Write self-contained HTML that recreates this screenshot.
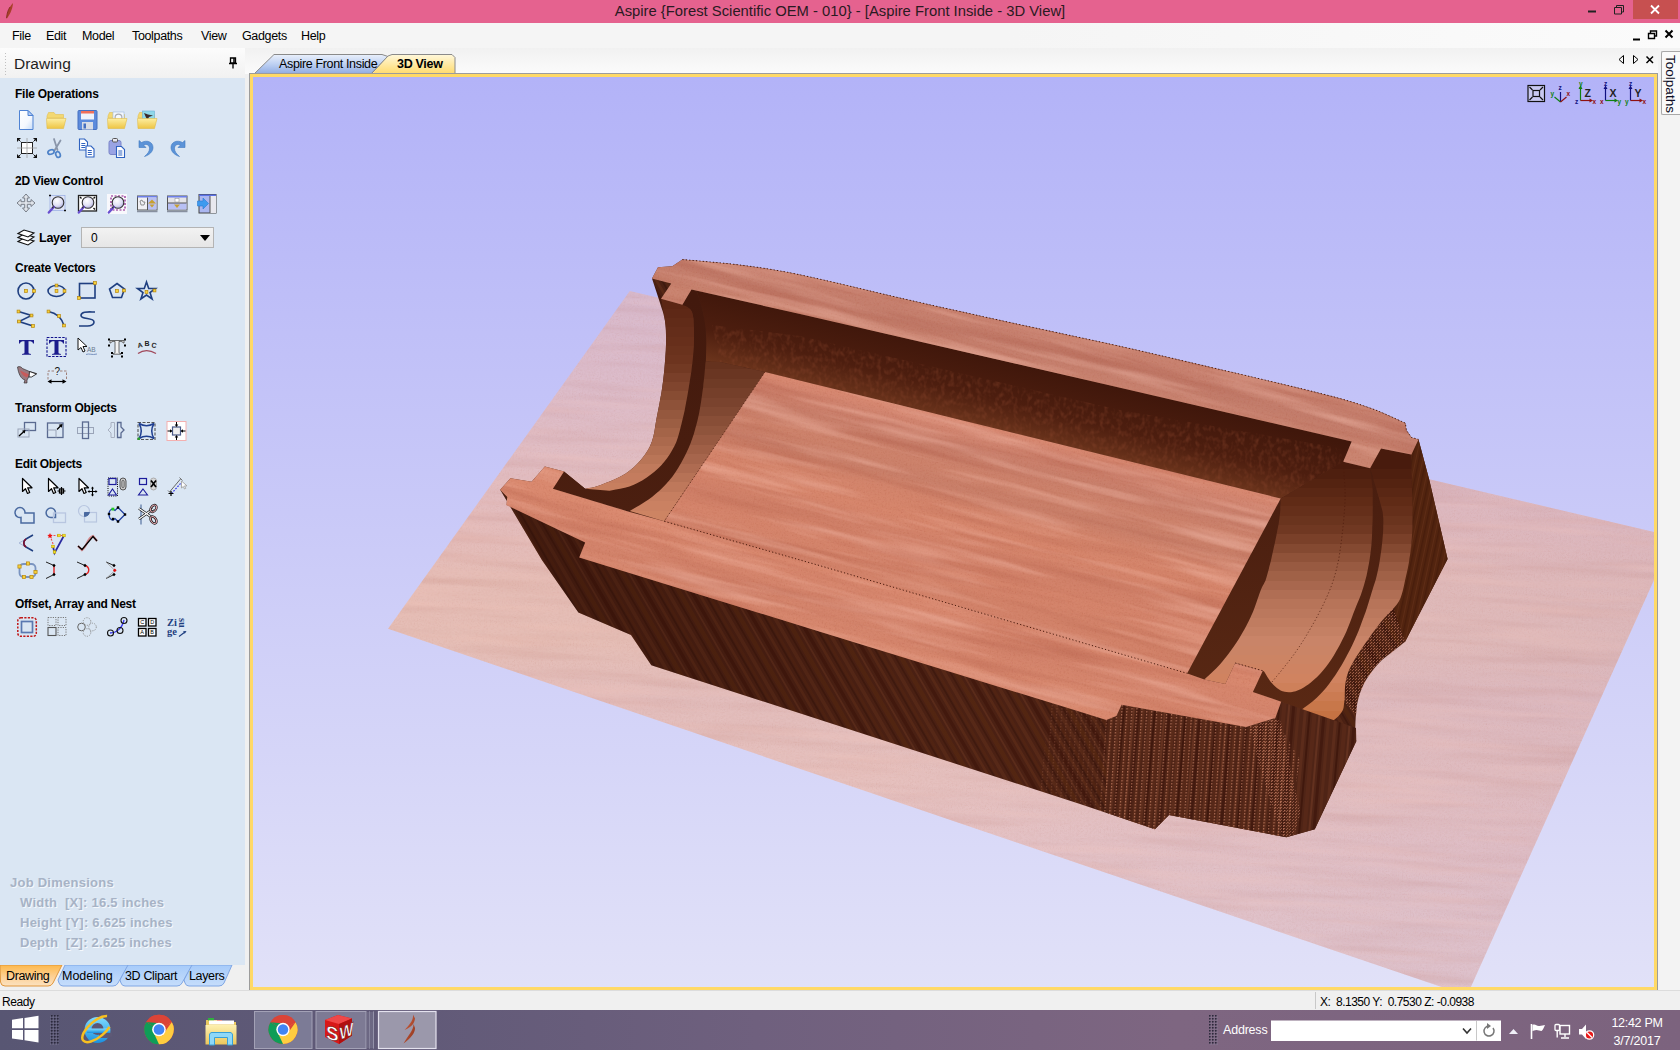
<!DOCTYPE html>
<html><head><meta charset="utf-8"><title>Aspire</title>
<style>
*{box-sizing:border-box;margin:0;padding:0}
html,body{width:1680px;height:1050px;overflow:hidden;background:#f0f0f0;font-family:"Liberation Sans",sans-serif;font-size:12px;color:#000}
.abs,.abs *{position:absolute}
#title{left:0;top:0;width:1680px;height:23px;background:#e5628f}
#title .t{left:0;width:1680px;top:3px;text-align:center;font-size:14.8px;color:#2a1a22;white-space:nowrap}
#menu{left:0;top:23px;width:1680px;height:25px;background:linear-gradient(90deg,#f5f5f5 60%,#fbfbfb)}
#menu span{top:6px;font-size:12.5px;color:#000;letter-spacing:-.35px}
#tabstrip{left:245px;top:48px;width:1415px;height:26px;background:linear-gradient(#f1f1f1,#fbfbfb)}
#lefthead{left:0;top:48px;width:245px;height:30px;background:linear-gradient(#fcfcfc,#f1f1f1)}
#left{left:0;top:78px;width:245px;height:887px;background:#dae6f3;overflow:hidden}
#leftgap{left:245px;top:74px;width:5px;height:916px;background:#f0f0f0}
#view{left:249px;top:73px;width:1409px;height:918px;background:#ffd966;border:1px solid #9c9c9c}
#gl{left:253px;top:77px;width:1401px;height:910px;background:linear-gradient(#b3b3f8,#e1e1f8);overflow:hidden}
#right{left:1658px;top:48px;width:22px;height:942px;background:#f3f3f3}
#status{left:0;top:990px;width:1680px;height:20px;background:#f0f0f0;border-top:1px solid #dcdcdc}
#task{left:0;top:1010px;width:1680px;height:40px;background:linear-gradient(90deg,#585673 0%,#615a78 25%,#6f607e 45%,#7e6681 70%,#7c637e 100%)}
.h{left:15px;font-weight:bold;font-size:12px;color:#000;white-space:nowrap;letter-spacing:-0.25px;margin-top:1px}
.jd{color:#a7b3c6;font-weight:bold;font-size:13px;white-space:nowrap;text-shadow:1px 1px 0 #f4f8fc;letter-spacing:.25px}
.btab{top:0;height:23px;font-size:12.5px;white-space:nowrap;letter-spacing:-.35px}
.tb{top:3px;height:36px;background:rgba(255,255,255,.2);border:1px solid rgba(255,255,255,.3)}
</style></head><body>
<div id="title" class="abs"><div class="t">Aspire {Forest Scientific OEM - 010} - [Aspire Front Inside - 3D View]</div>
<svg style="left:3px;top:2px" width="14" height="18" viewBox="0 0 14 18"><path d="M10 1c-3 3-6 8-6.500 16 3-4 6-9 6.500-16z" fill="#a8402a"/><path d="M7 5c-2 3-3 6-3.500 11" stroke="#7a2a18" stroke-width=".8" fill="none"/></svg>
<div style="left:1633px;top:0;width:45px;height:19px;background:#c75050"></div>
<svg style="left:1580px;top:0" width="100" height="22" viewBox="0 0 100 22"><path d="M8 11.500h8" stroke="#222" stroke-width="2"/><path d="M34.500 7.500h7v6.500h-7zM36.500 7.500v-2h7v6.500h-2" fill="none" stroke="#222" stroke-width="1"/><path d="M71 5.500l8 8M79 5.500l-8 8" stroke="#fff" stroke-width="1.800"/></svg>
</div>
<div id="menu" class="abs"><span style="left:12px">File</span><span style="left:46px">Edit</span><span style="left:82px">Model</span><span style="left:132px">Toolpaths</span><span style="left:201px">View</span><span style="left:242px">Gadgets</span><span style="left:301px">Help</span>
<svg style="left:1625px;top:3px" width="55" height="20" viewBox="0 0 55 20"><path d="M8 13.500h7" stroke="#000" stroke-width="2"/><path d="M23.500 7.500h6v5h-6zM25.500 7.500v-2.500h6v5h-2" fill="none" stroke="#000" stroke-width="1.400"/><path d="M40.500 4.500l7 7M47.500 4.500l-7 7" stroke="#000" stroke-width="2"/></svg>
</div>
<div id="tabstrip" class="abs">
<svg style="left:0;top:0" width="1415" height="26" viewBox="245 48 1415 26">
<defs><linearGradient id="tb1" x1="0" y1="0" x2="0" y2="1"><stop offset="0" stop-color="#eaf0fb"/><stop offset=".5" stop-color="#bdd0f2"/><stop offset="1" stop-color="#8eaae2"/></linearGradient>
<linearGradient id="tb2" x1="0" y1="0" x2="0" y2="1"><stop offset="0" stop-color="#fff8dc"/><stop offset="1" stop-color="#ffd966"/></linearGradient></defs>
<path d="M254 74l20-19.500h108l6 2-17 17.500z" fill="url(#tb1)" stroke="#8a8a8a" stroke-width="1"/>
<path d="M371 75l17-19 4-1.500h60l3 3v17.500z" fill="url(#tb2)"/><path d="M371 74l17-18 4-1.500h60l3 3v16.500" fill="none" stroke="#8a8a8a" stroke-width="1"/>
<path d="M1623.500 55.500v8l-4.500-4zM1633.500 55.500v8l4.500-4z" fill="none" stroke="#000" stroke-width="1"/><path d="M1646.500 56.500l6.500 6.500M1653 56.500l-6.500 6.500" stroke="#000" stroke-width="1.500"/>
</svg>
<div style="left:34px;top:9px;font-size:12.5px;white-space:nowrap;letter-spacing:-.35px">Aspire Front Inside</div>
<div style="left:152px;top:9px;font-size:12.5px;font-weight:bold;white-space:nowrap;letter-spacing:-.3px">3D View</div>
</div>
<div id="lefthead" class="abs"><div style="left:14px;top:7px;font-size:15.5px;color:#1e1e1e">Drawing</div>
<svg style="left:4px;top:5px" width="4" height="22"><path d="M1.500 0v22" stroke="#c0c0c0" stroke-width="1" stroke-dasharray="1 2"/></svg>
<svg style="left:228px;top:9px" width="10" height="12" viewBox="0 0 10 12"><path d="M2.500 1h5v5h-5zM1 6.500h8M5 6.500v5" stroke="#000" stroke-width="1.300" fill="none"/><path d="M6 1v5" stroke="#000" stroke-width="1.500"/></svg>
</div>
<div id="left" class="abs">
<svg width="245" height="887" viewBox="0 78 245 887" style="position:absolute;left:0;top:0">
<defs><linearGradient id="iDoc" x1="0" y1="0" x2="1" y2="1"><stop offset="0" stop-color="#fff"/><stop offset=".6" stop-color="#f4f8fe"/><stop offset="1" stop-color="#c6dcf8"/></linearGradient><linearGradient id="iFold" x1="0" y1="0" x2="0" y2="1"><stop offset="0" stop-color="#fdeea0"/><stop offset="1" stop-color="#eec544"/></linearGradient><radialGradient id="iLens" cx=".4" cy=".35" r=".7"><stop offset="0" stop-color="#fff"/><stop offset=".6" stop-color="#e0e0f4"/><stop offset="1" stop-color="#a8a8dc"/></radialGradient></defs>
<g transform="translate(15,109)"><path d="M4.5 1.5h8.5l5 5v14h-13.5z" fill="url(#iDoc)" stroke="#4f83d4"/><path d="M13 1.5v5h5z" fill="#b5cdf3" stroke="#4f83d4" stroke-linejoin="round"/></g>
<g transform="translate(45,109)"><path d="M2 7l1.5-3.5h5.5l1.5 2h8v3.5h-16.5z" fill="#f3d873" stroke="#e2c050" stroke-width=".6"/><path d="M1.5 9.5h19.5l-2.5 10h-16.5z" fill="url(#iFold)" stroke="#e0bc48" stroke-width=".6"/></g>
<g transform="translate(76,109)"><rect x="2" y="1.5" width="19" height="19" rx="1" fill="#5d8bdc" stroke="#4670c0"/><rect x="5" y="2" width="13" height="8.5" fill="#eef3fb"/><rect x="5" y="2" width="13" height="2.5" fill="#f0705a"/><rect x="6" y="13" width="11" height="7.5" fill="#d9dde6"/><rect x="7.5" y="14.5" width="2.5" height="5" fill="#4670c0"/></g>
<g transform="translate(106,109)"><path d="M2 7l1.5-3.5h5.5l1.5 2h8v3.5h-16.5z" fill="#f3d873" stroke="#e2c050" stroke-width=".6"/><rect x="7" y="3" width="11" height="9" fill="#f4f8fd" stroke="#9bb7e0" stroke-width=".6"/><circle cx="12.5" cy="8.5" r="3.4" fill="none" stroke="#a8acb4" stroke-width="1.2"/><path d="M1.5 9.5h19.5l-2.5 10h-16.5z" fill="url(#iFold)" stroke="#e0bc48" stroke-width=".6"/></g>
<g transform="translate(136,109)"><path d="M2 7l1.5-3.5h5.5l1.5 2h8v3.5h-16.5z" fill="#f3d873" stroke="#e2c050" stroke-width=".6"/><rect x="6.5" y="2" width="12" height="9.5" fill="#8fd8e8" stroke="#6ab0d8" stroke-width=".6"/><path d="M8 4l4 1.5 5 1-4 1.5-1.5 3-1.5-2.5z" fill="#3a2a2a"/><path d="M1.5 9.5h19.5l-2.5 10h-16.5z" fill="url(#iFold)" stroke="#e0bc48" stroke-width=".6"/></g>
<g transform="translate(16,137)"><rect x="5.5" y="5.5" width="11" height="11" fill="#fff" stroke="#222" stroke-width="1"/><path d="M1 11h20M11 1v20" stroke="#a0a0a0" stroke-width=".8"/><path d="M1 1h4l-4 4zM21 1v4l-4-4zM1 21v-4l4 4zM21 21h-4l4-4z" fill="#111"/><path d="M1.5 1.5l3 3M20.500 1.500l-3 3M1.500 20.500l3-3M20.500 20.500l-3-3" stroke="#111" stroke-width="1"/></g>
<g transform="translate(45,137)"><path d="M9 2l3.5 11M15.5 3.500l-6 10" stroke="#8a96aa" stroke-width="1.8" stroke-linecap="round"/><ellipse cx="6" cy="15" rx="3.2" ry="2.2" fill="none" stroke="#4f83c8" stroke-width="1.7" transform="rotate(-20 6 15)"/><ellipse cx="13" cy="17.5" rx="2.2" ry="3" fill="none" stroke="#4f83c8" stroke-width="1.7" transform="rotate(-20 13 17.500)"/></g>
<g transform="translate(76,137)"><g transform="translate(3.500,2)"><path d="M0 0h5l3 3v8h-8z" fill="#fff" stroke="#2f62c0" stroke-width="1.1"/><path d="M1.800 4.500h4M1.800 6.500h4M1.800 8.500h4" stroke="#2f62c0" stroke-width="1"/></g><g transform="translate(10,9)"><path d="M0 0h5l3 3v8h-8z" fill="#fff" stroke="#2f62c0" stroke-width="1.1"/><path d="M1.800 4.500h4M1.800 6.500h4M1.800 8.500h4" stroke="#2f62c0" stroke-width="1"/></g></g>
<g transform="translate(106,137)"><rect x="3" y="3.500" width="12" height="14" rx="2" fill="#9aa4e4" stroke="#7a84c8"/><rect x="6.500" y="1.500" width="5" height="3.500" rx="1" fill="#e8e8f0" stroke="#555"/><g transform="translate(10.500,9.500)"><path d="M0 0h5l3 3v8h-8z" fill="#fff" stroke="#2f62c0" stroke-width="1.1"/><path d="M1.800 4.500h4M1.800 6.500h4M1.800 8.500h4" stroke="#2f62c0" stroke-width="1"/></g></g>
<g transform="translate(136,137)"><path d="M3 3.500v7h7l-2.500-2.500c3-1.500 6 0 6 3.500c0 3-2 5.500-5 8c5-1.500 8.500-5 8.500-9c0-5.500-6-8-11.500-5z" fill="#5b93d8" stroke="#3f78c0" stroke-width=".6"/></g>
<g transform="translate(166,137)"><g transform="translate(22,0) scale(-1,1)"><path d="M3 3.500v7h7l-2.500-2.500c3-1.500 6 0 6 3.500c0 3-2 5.500-5 8c5-1.500 8.500-5 8.500-9c0-5.500-6-8-11.500-5z" fill="#5b93d8" stroke="#3f78c0" stroke-width=".6"/></g></g>
<g transform="translate(15,193)"><path d="M11 1l3.500 4h-2.200v3.700h3.700v-2.200l4 3.500-4 3.500v-2.200h-3.700v3.700h2.200l-3.500 4-3.500-4h2.200v-3.700h-3.700v2.200l-4-3.500 4-3.500v2.200h3.700v-3.700h-2.200z" fill="#e0e4ea" stroke="#787e88" stroke-width="1"/></g>
<g transform="translate(46,193)"><rect x="4" y="2.500" width="15" height="15" fill="#dfe4f6" stroke="#8aa0e0" stroke-width=".6"/><circle cx="12" cy="9.500" r="5.800" fill="url(#iLens)" stroke="#333" stroke-width="1.100"/><path d="M7.800 14l-5 5.500" stroke="#6a4fd0" stroke-width="2.400" stroke-linecap="round"/><path d="M7.500 13.500l-1.500 1.700" stroke="#333" stroke-width="1.200"/><path d="M3 2.500h2M4 1.500v2M18 17.500h2M19 16.500v2" stroke="#111" stroke-width="1"/></g>
<g transform="translate(76,193)"><rect x="2.500" y="2.500" width="18" height="15.500" fill="#fff" stroke="#222" stroke-width="1.300"/><circle cx="12" cy="9.500" r="5.800" fill="url(#iLens)" stroke="#333" stroke-width="1.100"/><path d="M7.800 14l-5 5.500" stroke="#6a4fd0" stroke-width="2.400" stroke-linecap="round"/><path d="M7.500 13.500l-1.500 1.700" stroke="#333" stroke-width="1.200"/><path d="M4 4l1.500 1.500M19 4l-1.500 1.500M19 16.500l-1.500-1.500" stroke="#111" stroke-width="1.400"/></g>
<g transform="translate(106,193)"><rect x="1" y="1" width="20" height="20" fill="#f8f8fc"/><rect x="5" y="3" width="14" height="14" fill="none" stroke="#8a1a8a" stroke-width="1.200" stroke-dasharray="2 1.500"/><circle cx="12" cy="9.500" r="5.800" fill="url(#iLens)" stroke="#333" stroke-width="1.100"/><path d="M7.800 14l-5 5.500" stroke="#6a4fd0" stroke-width="2.400" stroke-linecap="round"/><path d="M7.500 13.500l-1.500 1.700" stroke="#333" stroke-width="1.200"/></g>
<g transform="translate(136,193)"><rect x="1.500" y="3" width="19.500" height="14" fill="#f0f0f4" stroke="#555" stroke-width="1"/><rect x="1.500" y="3" width="19.500" height="1.500" fill="#6c7fe8"/><rect x="11.500" y="4.500" width="9" height="12" fill="#b8c0f4"/><path d="M11.500 4.500v12.500" stroke="#555"/><path d="M16 6.500l4 4h-8zM13.500 11.500h5l-2.500 3z" fill="#c8a030"/><path d="M4 8l2-1 1 2 2 0-1 3-3 0z" fill="none" stroke="#555" stroke-width=".6"/><path d="M1 18.500h20.500" stroke="#8890a0" stroke-width="1.500"/></g>
<g transform="translate(166,193)"><rect x="1.500" y="3" width="19.500" height="14" fill="#e4e4e8" stroke="#555" stroke-width="1"/><rect x="1.500" y="3" width="19.500" height="1.500" fill="#6c7fe8"/><rect x="2" y="10" width="18.500" height="6.500" fill="#b8c0f4"/><path d="M2 10h18.500" stroke="#555"/><path d="M8 11.500h6l-3 3.500z" fill="#c8a030"/><rect x="9" y="5.500" width="4" height="3.500" fill="#fff" stroke="#888" stroke-width=".5"/><path d="M1 18.500h20.500" stroke="#8890a0" stroke-width="1.500"/></g>
<g transform="translate(196,193)"><rect x="3" y="1.500" width="17" height="18.500" fill="#aab6f0" stroke="#444" stroke-width="1"/><rect x="3" y="1.500" width="17" height="1.500" fill="#5b72e8"/><rect x="14" y="3" width="6" height="17" fill="#e8e8ee"/><path d="M14 3v17" stroke="#555"/><path d="M1.500 8h5.500v-3l5.500 5.500-5.500 5.500v-3h-5.500z" fill="#3d9af0" stroke="#2a78d0" stroke-width=".6"/></g>
<g transform="translate(15,226)"><path d="M3 15.500l6-3.500 10 3-6 4z" fill="#fff" stroke="#111" stroke-width="1.100"/><path d="M3 11.500l6-3.500 10 3-6 4z" fill="#fff" stroke="#111" stroke-width="1.100"/><path d="M3 7.500l6-3.500 10 3-6 4z" fill="#fff" stroke="#111" stroke-width="1.100"/></g>
<g transform="translate(15.5,280)"><circle cx="10.500" cy="11" r="8" stroke="#1f3f80" stroke-width="1.600" fill="none"/><rect x="9.1" y="9.6" width="2.800" height="2.800" fill="#f5d23c" stroke="#b8860b" stroke-width=".7"/><rect x="17.1" y="9.6" width="2.800" height="2.800" fill="#f5d23c" stroke="#b8860b" stroke-width=".7"/></g>
<g transform="translate(45.5,280)"><ellipse cx="11" cy="11" rx="8.500" ry="5.500" stroke="#1f3f80" stroke-width="1.600" fill="none"/><rect x="9.6" y="4.1" width="2.800" height="2.800" fill="#f5d23c" stroke="#b8860b" stroke-width=".7"/><rect x="9.6" y="9.6" width="2.800" height="2.800" fill="#f5d23c" stroke="#b8860b" stroke-width=".7"/><rect x="17.6" y="9.6" width="2.800" height="2.800" fill="#f5d23c" stroke="#b8860b" stroke-width=".7"/></g>
<g transform="translate(76,280)"><rect x="3.500" y="3.500" width="15.500" height="14.500" stroke="#1f3f80" stroke-width="1.600" fill="none"/><rect x="17.6" y="1.6" width="2.800" height="2.800" fill="#f5d23c" stroke="#b8860b" stroke-width=".7"/><rect x="1.6" y="16.6" width="2.800" height="2.800" fill="#f5d23c" stroke="#b8860b" stroke-width=".7"/></g>
<g transform="translate(106,280)"><path d="M11 3.500l7.500 5.500-3 8.500h-9l-3-8.500z" stroke="#1f3f80" stroke-width="1.600" fill="none" stroke-width="1.300"/><rect x="9.6" y="9.6" width="2.800" height="2.800" fill="#f5d23c" stroke="#b8860b" stroke-width=".7"/><rect x="16.6" y="9.1" width="2.800" height="2.800" fill="#f5d23c" stroke="#b8860b" stroke-width=".7"/></g>
<g transform="translate(135.5,280)"><path d="M11 2l2.200 6.500h6.800l-5.500 4 2.100 6.500-5.600-4-5.600 4 2.100-6.500-5.500-4h6.800z" stroke="#1f3f80" stroke-width="1.600" fill="none" stroke-width="1.200"/><rect x="9.6" y="10.6" width="2.800" height="2.800" fill="#f5d23c" stroke="#b8860b" stroke-width=".7"/><rect x="17.6" y="9.1" width="2.800" height="2.800" fill="#f5d23c" stroke="#b8860b" stroke-width=".7"/></g>
<g transform="translate(15.5,308)"><path d="M3 3.500l13 4-12.500 6 14 4.500" stroke="#1f3f80" stroke-width="1.600" fill="none" stroke-width="1.700"/><rect x="1.6" y="2.1" width="2.800" height="2.800" fill="#f5d23c" stroke="#b8860b" stroke-width=".7"/><rect x="14.6" y="6.1" width="2.800" height="2.800" fill="#f5d23c" stroke="#b8860b" stroke-width=".7"/><rect x="2.1" y="12.1" width="2.800" height="2.800" fill="#f5d23c" stroke="#b8860b" stroke-width=".7"/><rect x="16.1" y="16.6" width="2.800" height="2.800" fill="#f5d23c" stroke="#b8860b" stroke-width=".7"/></g>
<g transform="translate(45.5,308)"><path d="M3 3.500c8 1.500 13 6 15.500 14" stroke="#1f3f80" stroke-width="1.600" fill="none" stroke-width="1.500"/><rect x="1.6" y="2.1" width="2.800" height="2.800" fill="#f5d23c" stroke="#b8860b" stroke-width=".7"/><rect x="12.1" y="6.6" width="2.800" height="2.800" fill="#f5d23c" stroke="#b8860b" stroke-width=".7"/><rect x="17.1" y="16.1" width="2.800" height="2.800" fill="#f5d23c" stroke="#b8860b" stroke-width=".7"/></g>
<g transform="translate(76,308)"><path d="M19 4c-6 0-14-1-14 3.500s13 1.500 13 6.500-9 4-15 4" stroke="#1f3f80" stroke-width="1.600" fill="none" stroke-width="1.800"/></g>
<g transform="translate(15.5,336)"><path d="M3.500 4h15v3.500h-1c-.5-2-1.500-2.300-4.500-2.300v11.300c0 1 .8 1.300 2.500 1.500v.8h-9v-.8c1.700-.2 2.500-.5 2.500-1.500v-11.300c-3 0-4 .3-4.500 2.300h-1z" fill="#1c1c8c"/></g>
<g transform="translate(45.5,336)"><rect x="1.500" y="1.500" width="19" height="19" fill="none" stroke="#10108c" stroke-width="1.100" stroke-dasharray="2.500 1.300"/><path d="M3.500 4h15v3.500h-1c-.5-2-1.500-2.300-4.500-2.300v11.300c0 1 .8 1.300 2.500 1.500v.8h-9v-.8c1.700-.2 2.500-.5 2.500-1.500v-11.300c-3 0-4 .3-4.500 2.300h-1z" fill="#1c1c8c"/></g>
<g transform="translate(76,336)"><path d="M2 2v12l3-2.500 2 4.500 2-1-2-4.500h4z" fill="#fff" stroke="#111" stroke-width="1"/><text x="11" y="16" font-family="Liberation Sans,sans-serif" font-size="6.500" fill="#6a7a90">AB</text><path d="M10 18.500c3-1.500 6 1 11-.5" stroke="#7a94c0" stroke-width="1" fill="none"/></g>
<g transform="translate(106,336)"><path d="M4 4.500h14v2.500h-.8c-.3-1.300-1.200-1.600-4.200-1.600v11c0 .8.800 1 2 1.200v.6h-8v-.6c1.200-.2 2-.4 2-1.200v-11c-3 0-3.900.3-4.200 1.600h-.8z" fill="#f4f4f4" stroke="#444" stroke-width=".8"/><rect x="2" y="2.5" width="2" height="2" fill="#000"/><rect x="18" y="2.5" width="2" height="2" fill="#000"/><rect x="2" y="8.5" width="2" height="2" fill="#000"/><rect x="18" y="8.5" width="2" height="2" fill="#000"/><rect x="5" y="16" width="2" height="2" fill="#000"/><rect x="15" y="16" width="2" height="2" fill="#000"/><rect x="5" y="19.5" width="2" height="2" fill="#000"/><rect x="15" y="19.5" width="2" height="2" fill="#000"/></g>
<g transform="translate(136,336)"><text x="2" y="12" font-family="Liberation Sans,sans-serif" font-size="7" font-weight="bold" fill="#222" transform="rotate(-12 2 12)">A</text><text x="8.500" y="10" font-family="Liberation Sans,sans-serif" font-size="7" font-weight="bold" fill="#222">B</text><text x="15" y="11" font-family="Liberation Sans,sans-serif" font-size="7" font-weight="bold" fill="#222" transform="rotate(14 15 11)">C</text><path d="M2 17.500c5-3.500 12-3.500 18 0" stroke="#a0485a" stroke-width="1.300" fill="none"/></g>
<g transform="translate(16,363.5)"><path d="M1.500 3.500c2-1 4 0 5 1.500l7 3 7 2-5 3-2.500 0-2 3.500v3h-3l1-3c-4-1-6.500-6-7.500-13z" fill="#9a7a80" stroke="#222" stroke-width=".6"/><path d="M4 7c2 4 4 6 7 7l2-3z" fill="#c85a5a"/><path d="M13.500 8l7 2.500-5 3-2.500 0z" fill="#fff" stroke="#111" stroke-width=".8"/></g>
<g transform="translate(46,363.5)"><path d="M2 16v-8.500h6M14 7.500h6.500v8.500" stroke="#a08078" stroke-width="1" fill="none" stroke-dasharray="2.500 1.500"/><text x="8.500" y="11" font-family="Liberation Sans,sans-serif" font-size="10" fill="#111">?</text><path d="M3 18h16" stroke="#000" stroke-width="1.200"/><path d="M1.500 18l4-2.200v4.400zM20.500 18l-4-2.200v4.400z" fill="#000"/></g>
<g transform="translate(16,420)"><rect x="8.500" y="2.500" width="11" height="8" stroke="#5a6a90" stroke-width="1.300" fill="none"/><rect x="2" y="9" width="11" height="8" fill="none" stroke="#9aa4b8" stroke-width="1"/><path d="M3 16l5.500-5" stroke="#000" stroke-width="1.300"/><path d="M9.500 10l-3.500.8 2.700 2.700z" fill="#000"/></g>
<g transform="translate(45,420)"><rect x="2.500" y="3" width="15.500" height="14.500" stroke="#5a6a90" stroke-width="1.300" fill="none"/><path d="M2.500 10h8.500v7.500" fill="none" stroke="#9aa4b8" stroke-width="1"/><path d="M12 9.500l4.500-4.500" stroke="#000" stroke-width="1.300"/><path d="M17.500 4l-3.800.8 3 3z" fill="#000"/></g>
<g transform="translate(75.5,420)"><rect x="2" y="7.500" width="16" height="6" fill="none" stroke="#9aa4b8" stroke-width="1"/><rect x="7" y="2" width="6" height="16.500" stroke="#5a6a90" stroke-width="1.300" fill="none"/></g>
<g transform="translate(105.5,420)"><path d="M9 2.500v15h-3.500v-4.500l-3-3 3-3v-4.500z" fill="none" stroke="#a8b0c0" stroke-width="1"/><path d="M12 2.500v15h3.500v-4.500l3-3-3-3v-4.500z" stroke="#5a6a90" stroke-width="1.300" fill="none"/></g>
<g transform="translate(135.5,420)"><rect x="2.500" y="2.500" width="17" height="17" fill="none" stroke="#555" stroke-width="1.100" stroke-dasharray="3 1.500"/><path d="M3.500 3.500c5 3 10 3 15 0c-3 5-3 10 0 15c-5-3-10-3-15 0c3-5 3-10 0-15z" fill="none" stroke="#1f3f90" stroke-width="1.500"/><rect x="2" y="17.500" width="2.500" height="2.500" fill="#2ca02c"/></g>
<g transform="translate(165.5,420)"><rect x="1.500" y="1.500" width="19" height="19" fill="#fff" stroke="#f4b0b0" stroke-width="1"/><rect x="7" y="7" width="8" height="8" fill="#eee" stroke="#4a5a88" stroke-width="1.200"/><path d="M11 2v4M11 20v-4M2 11h4M20 11h-4" stroke="#000" stroke-width="1"/><path d="M11 7l-1.800-2.500h3.600zM11 15l-1.800 2.500h3.600zM7 11l-2.500-1.800v3.600zM15 11l2.500-1.800v3.600z" fill="#000"/></g>
<g transform="translate(16,476)"><g transform="translate(6.500,2.500)"><path d="M0 0v13l3-2.800 2 4.800 2.200-1-2-4.700h4.300z" fill="#fff" stroke="#000" stroke-width="1.200" stroke-linejoin="round"/></g></g>
<g transform="translate(46,476)"><g transform="translate(2.500,2.500)"><path d="M0 0v13l3-2.800 2 4.800 2.200-1-2-4.700h4.300z" fill="#fff" stroke="#000" stroke-width="1.200" stroke-linejoin="round"/></g><rect x="13.500" y="13" width="4" height="4" fill="#fff" stroke="#000" stroke-width="1.300"/><path d="M15.500 11v8M11.500 15h8" stroke="#000" stroke-width="1.200"/></g>
<g transform="translate(76.5,476)"><g transform="translate(2.500,2.500)"><path d="M0 0v13l3-2.800 2 4.800 2.200-1-2-4.700h4.300z" fill="#fff" stroke="#000" stroke-width="1.200" stroke-linejoin="round"/></g><path d="M16 11.500v8M12 15.500h8" stroke="#000" stroke-width="1.100"/><path d="M16 10.500l1.500 2h-3zM16 20.500l1.500-2h-3zM11 15.500l2-1.500v3zM21 15.500l-2-1.500v3z" fill="#000"/></g>
<g transform="translate(106,476)"><rect x="2" y="2" width="9.500" height="18" fill="none" stroke="#000" stroke-width="1" stroke-dasharray="1 1.200"/><rect x="3" y="2.500" width="7" height="6" fill="none" stroke="#1c1c9c" stroke-width="1.200"/><path d="M6.500 13l4 6h-8z" fill="none" stroke="#1c1c9c" stroke-width="1.100"/><rect x="14" y="2" width="6" height="12" rx="3" fill="#c8c8c8" stroke="#555" stroke-width="1"/><rect x="16" y="4.500" width="2" height="7" rx="1" fill="#eee" stroke="#333" stroke-width=".8"/></g>
<g transform="translate(136.5,476)"><rect x="3" y="2.500" width="7" height="6" fill="none" stroke="#1c1c9c" stroke-width="1.200"/><path d="M6.500 13l4.500 6h-9z" fill="none" stroke="#1c1c9c" stroke-width="1.100"/><rect x="14" y="2" width="6" height="12" rx="3" fill="#d8d8d8" stroke="#aaa" stroke-width="1"/><path d="M14.500 4.500l5 6.500M19.500 4.500l-5 6.500" stroke="#000" stroke-width="1.700"/></g>
<g transform="translate(166.5,476)"><path d="M3 16l11-13" stroke="#666" stroke-width="1"/><path d="M1.500 14.500l3 3M13 1.500l3 3" stroke="#666" stroke-width=".9"/><path d="M5 17.500l9-10" stroke="#1a1ae0" stroke-width="1.100" stroke-dasharray="1.500 1.500"/><path d="M2 17.500h5M4.500 15v5" stroke="#000" stroke-width="1.200"/><path d="M15 5v7l1.800-1.500 1.200 2.500 1.200-.6-1.200-2.500h2.500z" fill="#fff" stroke="#999" stroke-width=".8"/></g>
<g transform="translate(16,503.5)"><path d="M9 9.500a5 5 0 1 0-4 4.500v5.500h13v-10z" stroke="#4a6aa0" stroke-width="1.500" fill="none"/></g>
<g transform="translate(46,503.5)"><path d="M9.500 9.500v4.500h-4.500" fill="none" stroke="#4a6aa0" stroke-width="1.500"/><path d="M9.500 9.500a4.700 4.700 0 1 0-4.500 4.500" stroke="#4a6aa0" stroke-width="1.500" fill="none"/><rect x="7.500" y="9.500" width="12" height="9.500" fill="none" stroke="#b8c6e0" stroke-width="1.300"/></g>
<g transform="translate(76.5,503.5)"><circle cx="7.500" cy="7.500" r="5.500" fill="none" stroke="#b8c6e0" stroke-width="1.200"/><rect x="8" y="9" width="12" height="9.500" fill="none" stroke="#b8c6e0" stroke-width="1.200"/><path d="M8 9h5a5.500 5.500 0 0 1-5 4z" fill="#4a6aa0" stroke="#4a6aa0"/></g>
<g transform="translate(106,503.5)"><path d="M3 10.500c0-3 2-5 4-5l2 1.500 3-3 7 7-7 7-3-3-2 1.500c-2 0-4-2-4-6z" fill="none" stroke="#1f3fa0" stroke-width="1.300"/><rect x="1.8" y="9.3" width="2.400" height="2.400" fill="#000"/><rect x="10.8" y="2.8" width="2.400" height="2.400" fill="#000"/><rect x="17.8" y="9.8" width="2.400" height="2.400" fill="#000"/><rect x="10.8" y="16.8" width="2.400" height="2.400" fill="#000"/><rect x="5.8" y="14.3" width="2.400" height="2.400" fill="#000"/><rect x="5.500" y="4.200" width="2.800" height="2.800" fill="#20d020"/></g>
<g transform="translate(136.5,503.5)"><path d="M4.500 1v20" stroke="#3a5a90" stroke-width="1"/><path d="M2.500 5l13 9M2.500 15.500l14-10" stroke="#111" stroke-width="2.600"/><path d="M2.500 5l13 9M2.500 15.500l14-10" stroke="#fff" stroke-width="1.200"/><ellipse cx="17" cy="5" rx="2.500" ry="3.800" transform="rotate(35 17 5)" fill="none" stroke="#111" stroke-width="2.400"/><ellipse cx="17" cy="5" rx="2.500" ry="3.800" transform="rotate(35 17 5)" fill="none" stroke="#e8a8b0" stroke-width="1"/><ellipse cx="17" cy="16.500" rx="2.500" ry="3.800" transform="rotate(-35 17 16.500)" fill="none" stroke="#111" stroke-width="2.400"/><ellipse cx="17" cy="16.500" rx="2.500" ry="3.800" transform="rotate(-35 17 16.500)" fill="none" stroke="#e8a8b0" stroke-width="1"/></g>
<g transform="translate(16,532)"><path d="M17 3l-14 8 14 8" fill="none" stroke="#a8b8d8" stroke-width="1"/><path d="M17 3l-7 4c-3 2-3 6 0 8l7 4" fill="none" stroke="#1f3f80" stroke-width="1.500"/><path d="M10 7c-3 2-3 6 0 8" fill="none" stroke="#7a1030" stroke-width="1.700"/></g>
<g transform="translate(46,532)"><path d="M4 3.500h14M4 3.500l4 11" stroke="#f05050" stroke-width="1.100" stroke-dasharray="2 1.500" fill="none"/><path d="M18 3.500l-9.500 17.500-1.500-6.500" stroke="#2a2aa0" stroke-width="1.700" fill="none"/><path d="M4 1l.8 1.700 1.900.3-1.400 1.300.4 1.900-1.700-1-1.700 1 .4-1.900-1.400-1.300 1.900-.3z" fill="#f01010"/><rect x="11.7" y="2.2" width="2.600" height="2.600" fill="#f5e020" stroke="#b8a000" stroke-width=".5"/><rect x="16.7" y="2.2" width="2.600" height="2.600" fill="#f5e020" stroke="#b8a000" stroke-width=".5"/><rect x="5.7" y="13.2" width="2.600" height="2.600" fill="#f5e020" stroke="#b8a000" stroke-width=".5"/><rect x="7.2" y="18.7" width="2.600" height="2.600" fill="#f5e020" stroke="#b8a000" stroke-width=".5"/></g>
<g transform="translate(76,532)"><path d="M2 14l4 4c5-3 5-12 11-14l4 5" fill="none" stroke="#d06060" stroke-width="2.200" opacity=".7"/><path d="M2 14l4 3.500 11-13 4 4.500" fill="none" stroke="#000" stroke-width="1.300"/></g>
<g transform="translate(16,559.5)"><rect x="3.500" y="4.500" width="16" height="13" rx="4" fill="none" stroke="#7a94c0" stroke-width="1.800"/><rect x="1.9" y="5.4" width="3.200" height="3.200" fill="#f5d23c" stroke="#b8860b" stroke-width=".7"/><rect x="10.4" y="2.4" width="3.200" height="3.200" fill="#f5d23c" stroke="#b8860b" stroke-width=".7"/><rect x="17.9" y="10.9" width="3.200" height="3.200" fill="#f5d23c" stroke="#b8860b" stroke-width=".7"/><rect x="6.4" y="15.9" width="3.200" height="3.200" fill="#f5d23c" stroke="#b8860b" stroke-width=".7"/><rect x="13.9" y="15.9" width="3.200" height="3.200" fill="#f5d23c" stroke="#b8860b" stroke-width=".7"/></g>
<g transform="translate(43,559.5)"><path d="M3 2.500l8 3.500M3 19l8-4" stroke="#222" stroke-width="1"/><path d="M11 6v9" stroke="#e02020" stroke-width="1.400"/><rect x="9.800" y="4.800" width="2.400" height="2.400" fill="#000" transform="rotate(45 11 6)"/><rect x="9.800" y="13.800" width="2.400" height="2.400" fill="#000" transform="rotate(45 11 15)"/></g>
<g transform="translate(75,559.5)"><path d="M2 2.500l8 3.500M2 19l8-4" stroke="#222" stroke-width="1"/><path d="M10 6c5 1.500 5 7.500 0 9" stroke="#e02020" stroke-width="1.400" fill="none"/><rect x="8.800" y="4.800" width="2.400" height="2.400" fill="#000" transform="rotate(45 10 6)"/><rect x="8.800" y="13.800" width="2.400" height="2.400" fill="#000" transform="rotate(45 10 15)"/></g>
<g transform="translate(103,559.5)"><path d="M3 2.500l8 3.500M3 19l8-4" stroke="#222" stroke-width="1"/><path d="M3 2.500l9 8.500-9 8" stroke="#999" stroke-width=".8" fill="none"/><rect x="9.800" y="4.800" width="2.400" height="2.400" fill="#000" transform="rotate(45 11 6)"/><rect x="9.800" y="13.800" width="2.400" height="2.400" fill="#000" transform="rotate(45 11 15)"/><rect x="10.500" y="9.500" width="2.600" height="2.600" fill="#e01010" transform="rotate(45 11.800 10.800)"/></g>
<g transform="translate(16,616)"><rect x="1.800" y="1.800" width="18.500" height="18.500" rx="3" fill="none" stroke="#c01818" stroke-width="1.500" stroke-dasharray="2.200 1.300"/><rect x="5.500" y="5.500" width="11" height="11" fill="none" stroke="#5a78b0" stroke-width="1.700"/></g>
<g transform="translate(46,616)"><rect x="2" y="11.500" width="8" height="8" fill="none" stroke="#555" stroke-width="1.100"/><rect x="2" y="1.500" width="8" height="8" fill="none" stroke="#777" stroke-width="1" stroke-dasharray="1.200 1.200"/><rect x="12" y="1.500" width="8" height="8" fill="none" stroke="#777" stroke-width="1" stroke-dasharray="1.200 1.200"/><rect x="12" y="11.500" width="8" height="8" fill="none" stroke="#777" stroke-width="1" stroke-dasharray="1.200 1.200"/></g>
<g transform="translate(76,616)"><circle cx="5.500" cy="11" r="3.800" fill="none" stroke="#666" stroke-width="1"/><circle cx="11" cy="5.500" r="3.800" fill="none" stroke="#888" stroke-width=".9" stroke-dasharray="1.200 1.200"/><circle cx="16.500" cy="11" r="3.800" fill="none" stroke="#888" stroke-width=".9" stroke-dasharray="1.200 1.200"/><circle cx="11" cy="16.500" r="3.800" fill="none" stroke="#888" stroke-width=".9" stroke-dasharray="1.200 1.200"/></g>
<g transform="translate(106,616)"><path d="M4 17c6 0 12-4 14-13" stroke="#3a3af0" stroke-width="1.300" fill="none"/><circle cx="4.500" cy="17" r="3" fill="none" stroke="#111" stroke-width="1.100"/><circle cx="14" cy="14.500" r="3" fill="none" stroke="#111" stroke-width="1.100"/><circle cx="18" cy="4.500" r="3" fill="none" stroke="#111" stroke-width="1.100"/></g>
<g transform="translate(136,616)"><rect x="2.5" y="2.5" width="7.500" height="7.500" fill="#fff" stroke="#000" stroke-width="1.300"/><text x="4.3" y="8.4" font-family="Liberation Sans,sans-serif" font-size="5.500" fill="#000">C</text><rect x="12.5" y="2.5" width="7.500" height="7.500" fill="#fff" stroke="#000" stroke-width="1.300"/><text x="14.3" y="8.4" font-family="Liberation Sans,sans-serif" font-size="5.500" fill="#000">D</text><rect x="2.5" y="12.5" width="7.500" height="7.500" fill="#fff" stroke="#000" stroke-width="1.300"/><text x="4.3" y="18.4" font-family="Liberation Sans,sans-serif" font-size="5.500" fill="#000">A</text><rect x="12.5" y="12.5" width="7.500" height="7.500" fill="#fff" stroke="#000" stroke-width="1.300"/><text x="14.3" y="18.4" font-family="Liberation Sans,sans-serif" font-size="5.500" fill="#000">B</text></g>
<g transform="translate(166,616)"><text x="1" y="9.500" font-family="Liberation Serif,serif" font-size="10.500" font-weight="bold" fill="#1f3f80">Zi</text><text transform="translate(12.500,2) rotate(90)" font-family="Liberation Serif,serif" font-size="10.500" font-weight="bold" fill="#1f3f80">su</text><text x="1" y="19" font-family="Liberation Serif,serif" font-size="10.500" font-weight="bold" fill="#1f3f80">ge</text><path d="M13 20.500l6-4.500" stroke="#1f3f80" stroke-width="1.200"/><path d="M20.500 15l-3.500.3 1.800 2.500z" fill="#1f3f80"/></g>
</svg>
<div class="h" style="top:8px">File Operations</div>
<div class="h" style="top:95px">2D View Control</div>
<div class="h" style="left:39px;top:152px;font-size:12.5px">Layer</div>
<div style="left:81px;top:149px;width:133px;height:21px;background:linear-gradient(#f2f2f2,#e6e6e6);border:1px solid #b4b4b4"><span style="left:9px;top:3px;font-size:12px">0</span><svg style="left:118px;top:7px" width="10" height="6"><path d="M0 0h10l-5 6z" fill="#000"/></svg></div>
<div class="h" style="top:182px">Create Vectors</div>
<div class="h" style="top:322px">Transform Objects</div>
<div class="h" style="top:378px">Edit Objects</div>
<div class="h" style="top:518px">Offset, Array and Nest</div>
<div class="jd" style="left:10px;top:797px">Job Dimensions</div>
<div class="jd" style="left:20px;top:817px">Width&nbsp; [X]: 16.5 inches</div>
<div class="jd" style="left:20px;top:837px">Height [Y]: 6.625 inches</div>
<div class="jd" style="left:20px;top:857px">Depth&nbsp; [Z]: 2.625 inches</div>
</div>
<div id="btabs" class="abs" style="left:0;top:965px;width:245px;height:25px;background:#f0f0f0">
<svg style="left:0;top:0" width="245" height="25" viewBox="0 0 245 25">
<defs><linearGradient id="bt1" x1="0" y1="0" x2="0" y2="1"><stop offset="0" stop-color="#fdb84a"/><stop offset=".6" stop-color="#fdd29a"/><stop offset="1" stop-color="#fbe2c0"/></linearGradient>
<linearGradient id="bt2" x1="0" y1="0" x2="0" y2="1"><stop offset="0" stop-color="#a6cbfa"/><stop offset="1" stop-color="#c6ddfb"/></linearGradient></defs>
<path d="M232 0l-8 18q-1.500 3-5 3h-30q-3 0-4-3l-1-3 7-15z" fill="url(#bt2)" stroke="#7fa6e4"/>
<path d="M192 0l-10 18q-1.500 3-5 3h-52q-3 0-4-3l-1-3 7-15z" fill="url(#bt2)" stroke="#7fa6e4"/>
<path d="M128 0l-10 18q-1.500 3-5 3h-50q-3 0-4-3l-1-3 7-15z" fill="url(#bt2)" stroke="#7fa6e4"/>
<path d="M0 0h62l-9 18q-1.500 3-5 3h-43q-4 0-4.500-4z" fill="url(#bt1)" stroke="#e0963c"/>
</svg>
<div class="btab" style="left:6px;top:4px">Drawing</div><div class="btab" style="left:62px;top:4px;letter-spacing:0">Modeling</div><div class="btab" style="left:125px;top:4px">3D Clipart</div><div class="btab" style="left:189px;top:4px">Layers</div>
</div>
<div id="leftgap" class="abs"></div>
<div id="right" class="abs">
<div style="left:3px;top:3px;width:20px;height:64px;background:#fafafa;border:1px solid #a8a8a8;border-right:none;border-radius:2px 0 0 2px"></div>
<div style="left:-20px;top:28px;width:64px;height:16px;transform:rotate(90deg);font-size:13.5px;text-align:center;white-space:nowrap;color:#0c0c24">Toolpaths</div>
</div>
<div id="view" class="abs"></div>
<div id="gl" class="abs"><svg width="1680" height="1050" viewBox="0 0 1680 1050" style="position:absolute;left:-253px;top:-77px">
<defs>
<linearGradient id="gPlane" gradientUnits="userSpaceOnUse" x1="0" y1="291" x2="0" y2="991"><stop offset="0.000" stop-color="#d8bacd"/><stop offset="0.127" stop-color="#dcbcca"/><stop offset="0.227" stop-color="#e0bdc4"/><stop offset="0.327" stop-color="#e3bcbc"/><stop offset="0.413" stop-color="#e5bdb6"/><stop offset="0.499" stop-color="#e5beb6"/><stop offset="0.584" stop-color="#e2bdbc"/><stop offset="0.699" stop-color="#e6c1be"/><stop offset="0.799" stop-color="#e5c3c5"/><stop offset="0.913" stop-color="#e4c6ca"/><stop offset="1.000" stop-color="#e4c8cd"/></linearGradient><linearGradient id="gPlaneX" gradientUnits="userSpaceOnUse" x1="850" y1="0" x2="1650" y2="0"><stop offset="0" stop-color="#c4a8c8" stop-opacity="0"/><stop offset="1" stop-color="#c4a8c8" stop-opacity=".26"/></linearGradient>
<linearGradient id="gRim" gradientUnits="userSpaceOnUse" x1="1000" y1="320" x2="990" y2="362"><stop offset="0" stop-color="#c98371"/><stop offset="0.5" stop-color="#c37d6c"/><stop offset="1" stop-color="#ca8571"/></linearGradient>
<linearGradient id="gFloor" gradientUnits="userSpaceOnUse" x1="765" y1="372" x2="724.8" y2="536.1"><stop offset="0" stop-color="#d98a72"/><stop offset="0.07" stop-color="#d18570"/><stop offset="0.18" stop-color="#c87f6b"/><stop offset="0.3" stop-color="#cd836c"/><stop offset="0.4" stop-color="#c9806a"/><stop offset="0.5" stop-color="#d3856c"/><stop offset="0.62" stop-color="#d7876d"/><stop offset="0.75" stop-color="#d08169"/><stop offset="0.88" stop-color="#d5856c"/><stop offset="1" stop-color="#d2836a"/></linearGradient>
<linearGradient id="gRail" gradientUnits="userSpaceOnUse" x1="800" y1="560" x2="782" y2="630"><stop offset="0" stop-color="#da8a70"/><stop offset="0.5" stop-color="#d3846c"/><stop offset="1" stop-color="#d98a70"/></linearGradient>
<linearGradient id="gBack" gradientUnits="userSpaceOnUse" x1="1000" y1="360" x2="983" y2="430"><stop offset="0" stop-color="#40170b"/><stop offset="0.55" stop-color="#4d1e0f"/><stop offset="1" stop-color="#6e361d"/></linearGradient>
<linearGradient id="gEndV" gradientUnits="userSpaceOnUse" x1="0" y1="300" x2="0" y2="510"><stop offset="0.0000" stop-color="#5b2614"/><stop offset="0.0435" stop-color="#5b2614"/><stop offset="0.0435" stop-color="#5e2816"/><stop offset="0.0870" stop-color="#5e2816"/><stop offset="0.0870" stop-color="#612b18"/><stop offset="0.1304" stop-color="#612b18"/><stop offset="0.1304" stop-color="#642d1a"/><stop offset="0.1739" stop-color="#642d1a"/><stop offset="0.1739" stop-color="#672f1b"/><stop offset="0.2174" stop-color="#672f1b"/><stop offset="0.2174" stop-color="#6a321d"/><stop offset="0.2609" stop-color="#6a321d"/><stop offset="0.2609" stop-color="#6d341f"/><stop offset="0.3043" stop-color="#6d341f"/><stop offset="0.3043" stop-color="#723923"/><stop offset="0.3478" stop-color="#723923"/><stop offset="0.3478" stop-color="#793f29"/><stop offset="0.3913" stop-color="#793f29"/><stop offset="0.3913" stop-color="#80452e"/><stop offset="0.4348" stop-color="#80452e"/><stop offset="0.4348" stop-color="#874c33"/><stop offset="0.4783" stop-color="#874c33"/><stop offset="0.4783" stop-color="#8e5239"/><stop offset="0.5217" stop-color="#8e5239"/><stop offset="0.5217" stop-color="#95583e"/><stop offset="0.5652" stop-color="#95583e"/><stop offset="0.5652" stop-color="#9c5e43"/><stop offset="0.6087" stop-color="#9c5e43"/><stop offset="0.6087" stop-color="#a46448"/><stop offset="0.6522" stop-color="#a46448"/><stop offset="0.6522" stop-color="#ab694d"/><stop offset="0.6957" stop-color="#ab694d"/><stop offset="0.6957" stop-color="#b26f52"/><stop offset="0.7391" stop-color="#b26f52"/><stop offset="0.7391" stop-color="#b97557"/><stop offset="0.7826" stop-color="#b97557"/><stop offset="0.7826" stop-color="#c07a5c"/><stop offset="0.8261" stop-color="#c07a5c"/><stop offset="0.8261" stop-color="#c47c5e"/><stop offset="0.8696" stop-color="#c47c5e"/><stop offset="0.8696" stop-color="#c77f5f"/><stop offset="0.9130" stop-color="#c77f5f"/><stop offset="0.9130" stop-color="#cb8161"/><stop offset="0.9565" stop-color="#cb8161"/><stop offset="0.9565" stop-color="#ce8362"/><stop offset="1.0000" stop-color="#ce8362"/></linearGradient>
<linearGradient id="gEndL3" gradientUnits="userSpaceOnUse" x1="0" y1="360" x2="0" y2="520"><stop offset="0.0000" stop-color="#65321e"/><stop offset="0.0588" stop-color="#65321e"/><stop offset="0.0588" stop-color="#6a3622"/><stop offset="0.1176" stop-color="#6a3622"/><stop offset="0.1176" stop-color="#6f3b26"/><stop offset="0.1765" stop-color="#6f3b26"/><stop offset="0.1765" stop-color="#753f2a"/><stop offset="0.2353" stop-color="#753f2a"/><stop offset="0.2353" stop-color="#7a432e"/><stop offset="0.2941" stop-color="#7a432e"/><stop offset="0.2941" stop-color="#804832"/><stop offset="0.3529" stop-color="#804832"/><stop offset="0.3529" stop-color="#884e37"/><stop offset="0.4118" stop-color="#884e37"/><stop offset="0.4118" stop-color="#8f543c"/><stop offset="0.4706" stop-color="#8f543c"/><stop offset="0.4706" stop-color="#975941"/><stop offset="0.5294" stop-color="#975941"/><stop offset="0.5294" stop-color="#9f5f46"/><stop offset="0.5882" stop-color="#9f5f46"/><stop offset="0.5882" stop-color="#a6654c"/><stop offset="0.6471" stop-color="#a6654c"/><stop offset="0.6471" stop-color="#ae6b51"/><stop offset="0.7059" stop-color="#ae6b51"/><stop offset="0.7059" stop-color="#b67256"/><stop offset="0.7647" stop-color="#b67256"/><stop offset="0.7647" stop-color="#be785b"/><stop offset="0.8235" stop-color="#be785b"/><stop offset="0.8235" stop-color="#c67e60"/><stop offset="0.8824" stop-color="#c67e60"/><stop offset="0.8824" stop-color="#ca8162"/><stop offset="0.9412" stop-color="#ca8162"/><stop offset="0.9412" stop-color="#cd8463"/><stop offset="1.0000" stop-color="#cd8463"/></linearGradient>
<linearGradient id="gEndR" gradientUnits="userSpaceOnUse" x1="0" y1="460" x2="0" y2="720"><stop offset="0.0000" stop-color="#481b0d"/><stop offset="0.0357" stop-color="#481b0d"/><stop offset="0.0357" stop-color="#4e1f0f"/><stop offset="0.0714" stop-color="#4e1f0f"/><stop offset="0.0714" stop-color="#542311"/><stop offset="0.1071" stop-color="#542311"/><stop offset="0.1071" stop-color="#5a2714"/><stop offset="0.1429" stop-color="#5a2714"/><stop offset="0.1429" stop-color="#602b16"/><stop offset="0.1786" stop-color="#602b16"/><stop offset="0.1786" stop-color="#652f1a"/><stop offset="0.2143" stop-color="#652f1a"/><stop offset="0.2143" stop-color="#6a341e"/><stop offset="0.2500" stop-color="#6a341e"/><stop offset="0.2500" stop-color="#703822"/><stop offset="0.2857" stop-color="#703822"/><stop offset="0.2857" stop-color="#7a4029"/><stop offset="0.3214" stop-color="#7a4029"/><stop offset="0.3214" stop-color="#844931"/><stop offset="0.3571" stop-color="#844931"/><stop offset="0.3571" stop-color="#8f5239"/><stop offset="0.3929" stop-color="#8f5239"/><stop offset="0.3929" stop-color="#985a41"/><stop offset="0.4286" stop-color="#985a41"/><stop offset="0.4286" stop-color="#a06147"/><stop offset="0.4643" stop-color="#a06147"/><stop offset="0.4643" stop-color="#a8674e"/><stop offset="0.5000" stop-color="#a8674e"/><stop offset="0.5000" stop-color="#b06e54"/><stop offset="0.5357" stop-color="#b06e54"/><stop offset="0.5357" stop-color="#b77459"/><stop offset="0.5714" stop-color="#b77459"/><stop offset="0.5714" stop-color="#bb785d"/><stop offset="0.6071" stop-color="#bb785d"/><stop offset="0.6071" stop-color="#c07c60"/><stop offset="0.6429" stop-color="#c07c60"/><stop offset="0.6429" stop-color="#c48064"/><stop offset="0.6786" stop-color="#c48064"/><stop offset="0.6786" stop-color="#c98468"/><stop offset="0.7143" stop-color="#c98468"/><stop offset="0.7143" stop-color="#ca8466"/><stop offset="0.7500" stop-color="#ca8466"/><stop offset="0.7500" stop-color="#cc8464"/><stop offset="0.7857" stop-color="#cc8464"/><stop offset="0.7857" stop-color="#ce8362"/><stop offset="0.8214" stop-color="#ce8362"/><stop offset="0.8214" stop-color="#d08360"/><stop offset="0.8571" stop-color="#d08360"/><stop offset="0.8571" stop-color="#ce805a"/><stop offset="0.8929" stop-color="#ce805a"/><stop offset="0.8929" stop-color="#cb7b52"/><stop offset="0.9286" stop-color="#cb7b52"/><stop offset="0.9286" stop-color="#c8774a"/><stop offset="0.9643" stop-color="#c8774a"/><stop offset="0.9643" stop-color="#c57243"/><stop offset="1.0000" stop-color="#c57243"/></linearGradient>
<pattern id="streak" width="46" height="40" patternUnits="userSpaceOnUse" patternTransform="skewX(30)"><rect width="46" height="40" fill="#4a2013"/><rect x="2" width="4" height="40" fill="#562817"/><rect x="9" width="2" height="40" fill="#3f190e"/><rect x="13" width="5" height="40" fill="#522511"/><rect x="21" width="2" height="40" fill="#5a2b1a"/><rect x="26" width="4" height="40" fill="#41180d"/><rect x="33" width="3" height="40" fill="#572816"/><rect x="39" width="2" height="40" fill="#3e190e"/><rect x="42" width="3" height="40" fill="#502312"/></pattern>
<linearGradient id="gWallX" gradientUnits="userSpaceOnUse" x1="500" y1="0" x2="1360" y2="0"><stop offset="0" stop-color="#2a0c04" stop-opacity=".35"/><stop offset="0.35" stop-color="#2a0c04" stop-opacity=".12"/><stop offset="0.7" stop-color="#8a4a2c" stop-opacity=".0"/><stop offset="0.74" stop-color="#9a5532" stop-opacity=".25"/><stop offset="0.9" stop-color="#9a5532" stop-opacity=".2"/><stop offset="0.94" stop-color="#2a0c04" stop-opacity=".1"/><stop offset="1" stop-color="#2a0c04" stop-opacity=".15"/></linearGradient>
<linearGradient id="gDark" gradientUnits="userSpaceOnUse" x1="0" y1="300" x2="0" y2="720"><stop offset="0" stop-color="#42190d"/><stop offset="0.5" stop-color="#4b1f10"/><stop offset="1" stop-color="#5a2914"/></linearGradient>
<pattern id="vlines" width="7" height="10" patternUnits="userSpaceOnUse" patternTransform="skewX(-12)"><rect width="7" height="10" fill="#52240f"/><rect x="1" width="1" height="10" fill="#5e2c16"/><rect x="4" width="1.500" height="10" fill="#481d0c"/></pattern>
<filter id="grainF" x="0" y="0" width="100%" height="100%" color-interpolation-filters="sRGB"><feTurbulence type="fractalNoise" baseFrequency="0.006 0.09" numOctaves="3" seed="7" result="n"/><feColorMatrix in="n" type="matrix" values="0 0 0 0 0.6  0 0 0 0 0.25  0 0 0 0 0.18  0.55 0 0 0 -0.255" result="a"/><feTurbulence type="fractalNoise" baseFrequency="0.7" numOctaves="2" seed="11" result="m"/><feColorMatrix in="m" type="matrix" values="0 0 0 0 0.65  0 0 0 0 0.28  0 0 0 0 0.18  0 0.6 0 0 -0.29" result="b"/><feMerge><feMergeNode in="a"/><feMergeNode in="b"/></feMerge></filter>
<filter id="grainL" x="0" y="0" width="100%" height="100%" color-interpolation-filters="sRGB"><feTurbulence type="fractalNoise" baseFrequency="0.006 0.09" numOctaves="3" seed="23" result="n"/><feColorMatrix in="n" type="matrix" values="0 0 0 0 1  0 0 0 0 0.8  0 0 0 0 0.74  -1.0 0 0 0 0.52"/></filter>
<filter id="mottle" x="0" y="0" width="100%" height="100%" color-interpolation-filters="sRGB"><feTurbulence type="fractalNoise" baseFrequency="0.22 0.16" numOctaves="2" seed="5"/><feColorMatrix type="matrix" values="0 0 0 0 0.56  0 0 0 0 0.28  0 0 0 0 0.18  0.9 0 0 0 -0.4"/></filter>
<pattern id="dots" width="5" height="3" patternUnits="userSpaceOnUse" patternTransform="skewX(-4)"><rect x="1" y="0" width="1.200" height="1.500" fill="#f0a080"/></pattern>
<pattern id="vstreak" width="31" height="20" patternUnits="userSpaceOnUse" patternTransform="skewX(-5)"><rect width="31" height="20" fill="#4f2416"/><rect x="2" width="3" height="20" fill="#5c2c1b"/><rect x="7" width="2" height="20" fill="#40180d"/><rect x="11" width="4" height="20" fill="#572818"/><rect x="17" width="2" height="20" fill="#63311f"/><rect x="21" width="3" height="20" fill="#431a0f"/><rect x="26" width="3" height="20" fill="#592a19"/></pattern>
<pattern id="dots2" width="3" height="3" patternUnits="userSpaceOnUse"><rect x="0" y="0" width="1" height="1" fill="#e8967a"/><rect x="2" y="1" width="1" height="1" fill="#e8967a"/></pattern>
</defs>
<polygon points="388.0,628.8 629.8,291.0 1673.5,536.7 1467.0,995.6" fill="url(#gPlane)"/>
<polygon points="388.0,628.8 629.8,291.0 1673.5,536.7 1467.0,995.6" fill="url(#gPlaneX)"/>
<clipPath id="cpPlane"><polygon points="388.0,628.8 629.8,291.0 1673.5,536.7 1467.0,995.6"/></clipPath>
<g clip-path="url(#cpPlane)" opacity=".4"><g transform="rotate(3 900 500)"><rect x="350" y="250" width="1350" height="800" filter="url(#grainF)" fill="#000"/><rect x="350" y="250" width="1350" height="800" filter="url(#grainL)" fill="#000"/></g></g>
<polygon points="652.0,278.5 658.0,267.3 672.3,266.3 682.4,259.6 688.6,260.1 697.2,260.8 707.4,261.7 718.5,262.7 729.6,263.8 740.0,265.0 749.4,266.2 758.3,267.4 767.4,268.8 776.9,270.4 787.7,272.3 800.0,274.8 814.4,277.9 830.4,281.6 847.5,285.6 865.2,289.8 882.9,294.0 900.0,298.0 916.4,301.7 932.6,305.4 948.8,309.0 965.2,312.6 982.2,316.4 1000.0,320.3 1019.1,324.5 1039.3,328.8 1060.0,333.2 1080.7,337.7 1100.9,342.1 1120.0,346.3 1137.8,350.3 1154.7,354.2 1171.1,358.0 1187.2,361.8 1203.4,365.6 1220.0,369.5 1237.6,373.6 1256.0,377.9 1274.5,382.3 1292.2,386.5 1308.5,390.4 1322.4,393.9 1333.6,396.8 1342.8,399.3 1350.4,401.5 1357.1,403.6 1363.4,405.7 1370.0,408.0 1377.0,410.6 1384.0,413.5 1390.7,416.5 1396.7,419.2 1401.7,421.5 1405.4,423.2 1406.4,430.3 1411.4,437.4 1418.5,439.4 1429.2,479.4 1447.6,559.0 1405.1,641.7 1404.1,642.5 1402.7,643.6 1401.0,645.0 1399.1,646.5 1397.1,648.1 1395.0,649.8 1392.7,651.6 1390.2,653.5 1387.5,655.6 1384.7,657.7 1382.0,660.1 1379.5,662.5 1377.1,665.1 1374.6,668.0 1372.2,670.9 1370.0,674.0 1367.9,677.0 1366.0,680.0 1364.3,683.0 1362.9,686.0 1361.6,689.0 1360.4,692.1 1359.4,695.1 1358.5,698.0 1357.8,700.9 1357.2,703.7 1356.8,706.4 1356.5,709.2 1356.3,712.0 1356.0,714.9 1355.7,718.0 1355.5,721.2 1355.4,724.5 1355.3,727.7 1355.2,730.6 1355.2,733.1 1355.3,735.1 1355.5,736.8 1355.7,738.3 1355.9,739.5 1356.2,740.4 1356.3,741.2 1314.8,829.2 1286.4,837.3 1169.0,815.0 1154.9,829.2 1080.0,804.0 651.3,665.3 631.0,634.9 578.4,612.6 541.9,560.0 500.2,489.8 510.4,478.3 531.6,481.7 544.8,466.5 564.0,471.6 585.2,488.8 586.8,488.5 588.9,488.1 591.5,487.7 594.5,487.0 597.8,486.1 601.4,484.8 605.5,483.1 610.3,481.2 615.4,479.0 620.5,476.5 625.4,473.7 629.8,470.6 633.8,467.2 637.6,463.5 641.2,459.5 644.5,455.2 647.5,450.8 650.0,446.3 651.9,441.6 653.3,436.8 654.4,431.8 655.2,426.6 656.0,421.4 657.0,416.0 658.1,410.5 659.2,405.0 660.2,399.2 661.3,393.5 662.2,387.6 663.0,381.7 663.7,375.6 664.4,369.2 664.9,362.7 665.4,356.4 665.8,350.4 666.0,345.0 666.1,340.3 666.2,336.1 666.1,332.2 665.9,328.6 665.6,324.9 665.0,321.0 664.1,316.7 662.9,312.0 661.4,307.4 660.0,303.0 658.8,299.3 658.0,296.7" fill="url(#streak)"/>
<polygon points="691.5,289.6 800.0,313.9 1120.0,387.8 1351.7,441.4 1343.2,461.7 1280.7,498.5 765.0,372.0 720.0,362.0 705.7,361.4 706.0,335.0 703.0,312.0 697.0,292.0" fill="url(#gBack)"/>
<clipPath id="cpBack"><polygon points="712.0,325.0 720.0,362.0 765.0,372.0 1280.7,498.5 1343.2,461.7 1340.0,448.0 1120.0,410.0 800.0,336.0"/></clipPath>
<g clip-path="url(#cpBack)"><rect x="700" y="320" width="660" height="190" filter="url(#mottle)" fill="#000"/></g>
<polygon points="609.5,490.8 612.1,490.3 615.8,489.6 620.1,488.8 624.8,487.8 629.5,486.5 633.8,484.8 637.9,482.8 642.2,480.4 646.4,477.7 650.5,474.8 654.4,471.8 658.0,468.6 661.3,465.3 664.3,461.8 667.2,458.1 669.8,454.3 672.1,450.3 674.3,446.3 676.2,442.2 677.7,437.9 679.0,433.5 680.2,429.0 681.3,424.5 682.4,420.0 683.5,415.5 684.5,410.9 685.4,406.3 686.3,401.6 687.2,396.8 688.0,392.0 688.8,387.0 689.7,381.8 690.5,376.6 691.3,371.4 691.9,366.3 692.5,361.4 693.0,356.7 693.4,352.2 693.7,347.7 693.9,343.4 694.0,339.2 694.0,335.0 694.0,330.8 693.9,326.5 693.7,322.3 693.4,318.4 692.8,314.9 692.0,312.0 690.7,309.8 689.0,308.2 687.1,307.0 685.2,306.1 683.5,305.4 682.4,304.8 691.5,289.6 697.0,292.0 697.0,292.0 697.7,294.1 698.7,297.1 699.8,300.6 701.0,304.4 702.1,308.3 703.0,312.0 703.7,315.6 704.3,319.3 704.9,323.1 705.4,327.0 705.7,330.9 706.0,335.0 706.2,339.2 706.3,343.4 706.2,347.7 706.1,352.2 706.0,356.7 705.7,361.4 705.4,366.3 704.9,371.4 704.4,376.6 703.8,381.8 703.2,387.0 702.5,392.0 701.8,396.8 701.1,401.5 700.4,406.1 699.6,410.7 698.7,415.3 697.6,420.0 696.4,424.7 695.1,429.4 693.8,434.1 692.2,438.8 690.5,443.6 688.5,448.3 686.3,453.1 683.8,458.1 681.1,463.0 678.3,467.8 675.3,472.4 672.3,476.7 669.2,480.6 665.9,484.3 662.5,487.7 659.1,490.9 655.5,494.0 652.0,496.9 648.2,499.8 643.9,502.6 639.6,505.3 635.6,507.6 632.2,509.6 629.8,511.1 552.9,488.8 564.0,471.6 585.2,488.8" fill="url(#gDark)"/>
<polygon points="1372.7,513.6 1372.6,517.1 1372.5,521.9 1372.3,527.7 1372.1,533.8 1371.8,539.8 1371.4,545.1 1370.9,549.9 1370.3,554.7 1369.6,559.3 1368.9,563.7 1368.1,568.0 1367.3,572.0 1366.5,575.8 1365.6,579.3 1364.7,582.6 1363.8,585.8 1362.8,588.9 1361.8,592.0 1360.8,595.0 1359.7,597.8 1358.6,600.5 1357.4,603.2 1356.2,606.3 1354.8,609.7 1353.3,613.6 1351.8,617.8 1350.1,622.2 1348.3,626.8 1346.4,631.4 1344.3,636.0 1342.0,640.6 1339.5,645.4 1336.8,650.3 1334.1,655.0 1331.3,659.5 1328.5,663.6 1325.7,667.3 1322.8,670.8 1320.0,674.0 1317.1,676.9 1314.2,679.6 1311.4,682.0 1308.7,684.2 1305.9,686.1 1303.3,687.8 1300.6,689.2 1298.1,690.3 1295.6,691.2 1293.2,691.8 1290.9,692.2 1288.7,692.3 1286.6,692.1 1284.5,691.8 1282.5,691.2 1280.6,690.4 1278.7,689.3 1276.9,688.0 1275.2,686.5 1273.6,684.9 1272.0,683.3 1270.4,681.4 1268.9,679.2 1267.4,676.9 1266.1,674.7 1264.9,672.8 1264.1,671.5 1262.8,670.8 1252.9,691.9 1281.2,701.7 1290.4,717.5 1290.4,717.5 1293.4,715.4 1297.5,712.5 1302.4,709.0 1307.5,705.3 1312.5,701.5 1316.7,697.8 1320.2,694.3 1323.5,690.8 1326.5,687.3 1329.4,683.5 1332.2,679.6 1335.1,675.4 1338.1,670.8 1341.1,665.9 1344.1,660.7 1346.9,655.5 1349.7,650.2 1352.2,645.2 1354.5,640.3 1356.7,635.3 1358.7,630.4 1360.6,625.5 1362.3,620.8 1364.0,616.3 1365.6,611.9 1367.0,607.7 1368.3,603.6 1369.5,599.6 1370.7,595.7 1371.8,592.0 1372.9,588.5 1373.9,585.3 1374.9,582.2 1375.9,579.0 1376.7,575.7 1377.6,572.0 1378.4,567.9 1379.3,563.5 1380.0,558.9 1380.7,554.3 1381.4,549.6 1381.9,545.1 1382.4,540.6 1382.8,536.1 1383.1,531.6 1383.3,527.1 1383.4,522.9 1383.3,518.9 1383.0,515.4 1382.6,512.2 1382.0,509.3 1381.2,506.3 1380.3,503.0 1379.3,499.1 1378.0,494.2 1376.3,488.5 1374.4,482.5 1372.7,476.7 1371.2,471.8 1370.1,468.3" fill="url(#gDark)"/>
<polygon points="1280.7,498.5 1186.0,675.4 1204.3,679.4 1204.3,679.4 1205.9,677.9 1208.1,675.9 1210.8,673.5 1213.7,670.8 1216.6,667.9 1219.4,664.9 1222.2,661.7 1225.0,658.2 1228.0,654.5 1230.9,650.6 1233.8,646.6 1236.5,642.6 1239.1,638.4 1241.7,634.1 1244.2,629.7 1246.6,625.2 1248.9,620.7 1251.0,616.3 1253.0,611.8 1254.8,607.0 1256.5,602.3 1258.0,597.7 1259.5,593.6 1260.8,590.0 1262.0,587.3 1262.9,585.5 1263.8,584.0 1264.5,582.5 1265.4,580.7 1266.3,578.0 1267.3,574.5 1268.4,570.5 1269.5,566.1 1270.7,561.5 1271.8,556.6 1272.9,551.7 1274.0,546.5 1275.3,540.8 1276.5,534.9 1277.6,529.2 1278.6,523.7 1279.4,518.9 1279.9,514.5 1280.3,510.4 1280.5,506.6 1280.6,503.3 1280.6,500.6 1280.7,498.5" fill="url(#gDark)"/>
<polygon points="1418.5,439.4 1429.2,479.4 1447.6,559.0 1405.1,641.7 1393.0,607.0 1399.0,601.2 1405.6,578.0 1409.5,558.3 1412.2,532.0 1412.2,499.1 1410.9,453.8" fill="url(#vlines)"/>
<polygon points="661.0,298.7 661.5,301.1 662.1,304.4 662.9,308.3 663.7,312.6 664.5,316.9 665.0,321.0 665.4,324.8 665.7,328.4 665.9,332.1 666.1,336.0 666.1,340.2 666.0,345.0 665.8,350.4 665.4,356.4 664.9,362.7 664.4,369.2 663.7,375.6 663.0,381.7 662.2,387.6 661.3,393.5 660.2,399.2 659.2,405.0 658.1,410.5 657.0,416.0 656.0,421.4 655.2,426.6 654.4,431.8 653.3,436.8 651.9,441.6 650.0,446.3 647.5,450.8 644.5,455.2 641.2,459.5 637.6,463.5 633.8,467.2 629.8,470.6 625.4,473.7 620.5,476.5 615.3,479.0 610.3,481.2 605.5,483.1 601.4,484.8 597.8,486.1 594.5,487.0 591.5,487.7 588.9,488.1 586.8,488.5 585.2,488.8 609.5,490.8 612.1,490.3 615.8,489.6 620.1,488.8 624.8,487.8 629.5,486.5 633.8,484.8 637.9,482.8 642.2,480.4 646.4,477.7 650.5,474.8 654.4,471.8 658.0,468.6 661.3,465.3 664.3,461.8 667.2,458.1 669.8,454.3 672.1,450.3 674.3,446.3 676.2,442.2 677.7,437.9 679.0,433.5 680.2,429.0 681.3,424.5 682.4,420.0 683.5,415.5 684.5,410.9 685.4,406.3 686.3,401.6 687.2,396.8 688.0,392.0 688.8,387.0 689.7,381.8 690.5,376.6 691.3,371.4 691.9,366.3 692.5,361.4 693.0,356.7 693.4,352.2 693.7,347.7 693.9,343.4 694.0,339.2 694.0,335.0 694.0,330.8 693.9,326.5 693.7,322.3 693.4,318.4 692.8,314.9 692.0,312.0 690.7,309.8 689.0,308.2 687.1,307.0 685.2,306.1 683.5,305.4 682.4,304.8" fill="url(#gEndV)"/>
<polygon points="765.0,372.0 664.2,521.2 629.8,511.1 632.2,509.6 635.6,507.6 639.6,505.3 643.9,502.6 648.2,499.8 652.0,496.9 655.5,494.0 659.1,490.9 662.5,487.7 665.9,484.3 669.2,480.6 672.3,476.7 675.3,472.4 678.3,467.8 681.1,463.0 683.8,458.1 686.3,453.1 688.5,448.3 690.5,443.6 692.2,438.8 693.8,434.1 695.1,429.4 696.4,424.7 697.6,420.0 698.7,415.3 699.6,410.7 700.4,406.1 701.1,401.5 701.8,396.8 702.5,392.0 703.2,386.7 703.8,380.9 704.4,374.9 704.9,369.4 705.4,364.8 705.7,361.4 720.0,362.0" fill="url(#gEndL3)"/>
<polygon points="1280.7,498.5 1343.2,461.7 1370.1,468.3 1372.7,490.0 1372.7,513.6 1372.6,517.1 1372.5,521.9 1372.3,527.7 1372.1,533.8 1371.8,539.8 1371.4,545.1 1370.9,549.9 1370.3,554.7 1369.6,559.3 1368.9,563.7 1368.1,568.0 1367.3,572.0 1366.5,575.8 1365.6,579.3 1364.7,582.6 1363.8,585.8 1362.8,588.9 1361.8,592.0 1360.8,595.0 1359.7,597.8 1358.6,600.5 1357.4,603.2 1356.2,606.3 1354.8,609.7 1353.3,613.6 1351.8,617.8 1350.1,622.2 1348.3,626.8 1346.4,631.4 1344.3,636.0 1342.0,640.6 1339.5,645.4 1336.8,650.3 1334.1,655.0 1331.3,659.5 1328.5,663.6 1325.7,667.3 1322.8,670.8 1320.0,674.0 1317.1,676.9 1314.2,679.6 1311.4,682.0 1308.7,684.2 1305.9,686.1 1303.3,687.8 1300.6,689.2 1298.1,690.3 1295.6,691.2 1293.2,691.8 1290.9,692.2 1288.7,692.3 1286.6,692.1 1284.5,691.8 1282.5,691.2 1280.6,690.4 1278.7,689.3 1276.9,688.0 1275.2,686.5 1273.6,684.9 1272.0,683.3 1270.4,681.4 1268.9,679.2 1267.4,676.9 1266.1,674.7 1264.9,672.8 1264.1,671.5 1262.8,670.8 1235.2,663.0 1225.3,684.0 1204.3,679.4 1205.9,677.9 1208.1,675.9 1210.8,673.5 1213.7,670.8 1216.6,667.9 1219.4,664.9 1222.2,661.7 1225.0,658.2 1228.0,654.5 1230.9,650.6 1233.8,646.6 1236.5,642.6 1239.1,638.4 1241.7,634.1 1244.2,629.7 1246.6,625.2 1248.9,620.7 1251.0,616.3 1253.0,611.8 1254.8,607.0 1256.5,602.3 1258.0,597.7 1259.5,593.6 1260.8,590.0 1262.0,587.3 1262.9,585.5 1263.8,584.0 1264.5,582.5 1265.4,580.7 1266.3,578.0 1267.3,574.5 1268.4,570.5 1269.5,566.1 1270.7,561.5 1271.8,556.6 1272.9,551.7 1274.0,546.5 1275.3,540.8 1276.5,534.9 1277.6,529.2 1278.6,523.7 1279.4,518.9 1279.9,514.5 1280.3,510.4 1280.5,506.6 1280.6,503.3 1280.6,500.6 1280.7,498.5" fill="url(#gEndR)"/>
<polygon points="1381.0,448.5 1410.9,453.8 1411.1,458.9 1411.3,466.0 1411.6,474.4 1411.8,483.2 1412.0,491.7 1412.2,499.1 1412.3,505.4 1412.4,511.2 1412.5,516.7 1412.4,522.0 1412.4,527.0 1412.2,532.0 1411.9,536.8 1411.5,541.5 1411.1,546.0 1410.6,550.3 1410.1,554.4 1409.5,558.3 1409.0,561.9 1408.4,565.2 1407.8,568.3 1407.1,571.4 1406.4,574.6 1405.6,578.0 1404.8,581.7 1404.0,585.6 1403.1,589.6 1402.0,593.6 1400.7,597.5 1399.0,601.2 1396.8,604.5 1394.3,607.6 1391.4,610.6 1388.4,613.6 1385.4,616.7 1382.4,620.2 1379.4,624.1 1376.2,628.2 1373.0,632.6 1369.8,636.9 1366.8,641.2 1364.0,645.2 1361.4,649.0 1359.0,652.7 1356.6,656.3 1354.5,659.7 1352.6,663.0 1350.9,666.2 1349.5,669.1 1348.4,671.7 1347.5,674.2 1346.8,676.6 1346.2,679.2 1345.6,682.0 1345.2,685.2 1344.9,688.6 1344.8,692.2 1344.7,695.7 1344.6,698.9 1344.3,701.7 1344.0,704.0 1343.8,705.9 1343.6,707.5 1343.2,709.0 1342.6,710.6 1341.6,712.2 1340.2,714.0 1338.6,715.9 1336.7,717.8 1334.6,719.6 1332.3,721.3 1329.8,722.7 1326.9,723.9 1323.5,725.0 1319.9,726.0 1316.4,726.8 1313.5,727.5 1311.4,728.0 1290.4,717.5 1290.4,717.5 1293.4,715.4 1297.5,712.5 1302.4,709.0 1307.5,705.3 1312.5,701.5 1316.7,697.8 1320.2,694.3 1323.5,690.8 1326.5,687.3 1329.4,683.5 1332.2,679.6 1335.1,675.4 1338.1,670.8 1341.1,665.9 1344.1,660.7 1346.9,655.5 1349.7,650.2 1352.2,645.2 1354.5,640.3 1356.7,635.3 1358.7,630.4 1360.6,625.5 1362.3,620.8 1364.0,616.3 1365.6,611.9 1367.0,607.7 1368.3,603.6 1369.5,599.6 1370.7,595.7 1371.8,592.0 1372.9,588.5 1373.9,585.3 1374.9,582.2 1375.9,579.0 1376.7,575.7 1377.6,572.0 1378.4,567.9 1379.3,563.5 1380.0,558.9 1380.7,554.3 1381.4,549.6 1381.9,545.1 1382.4,540.6 1382.8,536.1 1383.1,531.6 1383.3,527.1 1383.4,522.9 1383.3,518.9 1383.0,515.4 1382.6,512.2 1382.0,509.3 1381.2,506.3 1380.3,503.0 1379.3,499.1 1378.0,494.2 1376.3,488.5 1374.4,482.5 1372.7,476.7 1371.2,471.8 1370.1,468.3" fill="url(#gEndR)"/>
<polygon points="500.2,489.8 507.3,497.0 506.3,505.0 585.2,542.4 579.2,557.6 820.0,631.7 1080.0,711.8 1106.3,720.0 1116.4,715.9 1121.5,704.8 1246.0,727.0 1275.3,717.9 1281.2,701.7 1356.0,728.0 1314.8,829.2 1286.4,837.3 1169.0,815.0 1154.9,829.2 1080.0,804.0 651.3,665.3 631.0,634.9 578.4,612.6 541.9,560.0 500.2,489.8" fill="url(#gWallX)"/>
<polygon points="1121.5,704.8 1246.0,727.0 1275.3,717.9 1281.2,701.7 1356.0,728.0 1356.3,741.2 1314.8,829.2 1286.4,837.3 1169.0,815.0 1154.9,829.2 1106.0,812.5 1106.3,720.0 1116.4,715.9" fill="url(#vstreak)"/>
<polygon points="1121.5,704.8 1246.0,727.0 1275.3,717.9 1300.0,760.0 1286.4,837.3 1169.0,815.0 1154.9,829.2 1100.0,811.0 1106.3,720.0 1116.4,715.9" fill="url(#dots)" opacity="0.55"/>
<polygon points="1250.0,728.0 1275.3,717.9 1281.0,722.0 1290.5,769.5 1300.6,812.0 1294.5,834.0 1286.4,837.3 1282.0,836.0 1274.0,812.0 1258.0,761.0" fill="url(#dots2)" opacity="0.45"/>
<polygon points="1405.1,641.7 1395.0,649.8 1379.5,662.5 1366.0,680.0 1358.5,698.0 1356.0,714.9 1344.3,701.7 1345.6,682.0 1350.9,666.2 1364.0,645.2 1382.4,620.2 1393.0,607.0" fill="url(#dots2)" opacity="0.5"/>
<polygon points="1080.0,711.8 1106.3,720.0 1100.0,811.0 1080.0,804.0 1040.0,790.0 1050.0,702.0" fill="url(#dots)" opacity="0.18"/>
<polygon points="765.0,372.0 1280.7,498.5 1186.0,675.4 664.2,521.2" fill="url(#gFloor)"/>
<polygon points="664.2,521.2 820.0,565.7 1080.0,642.0 1187.3,673.4 1204.3,679.4 1225.3,684.0 1235.2,663.0 1262.8,670.8 1252.9,691.9 1281.2,701.7 1275.3,717.9 1246.0,727.0 1121.5,704.8 1116.4,715.9 1106.3,720.0 1080.0,711.8 820.0,631.7 579.2,557.6 585.2,542.4 506.3,505.0 507.3,497.0 500.2,489.8 510.4,478.3 531.6,481.7 544.8,466.5 564.0,471.6 552.9,488.8 629.8,512.0" fill="url(#gRail)"/>
<polygon points="652.0,278.5 658.0,267.3 672.3,266.3 682.4,259.6 688.6,260.1 697.2,260.8 707.4,261.7 718.5,262.7 729.6,263.8 740.0,265.0 749.4,266.2 758.3,267.4 767.4,268.8 776.9,270.4 787.7,272.3 800.0,274.8 814.4,277.9 830.4,281.6 847.5,285.6 865.2,289.8 882.9,294.0 900.0,298.0 916.4,301.7 932.6,305.4 948.8,309.0 965.2,312.6 982.2,316.4 1000.0,320.3 1019.1,324.5 1039.3,328.8 1060.0,333.2 1080.7,337.7 1100.9,342.1 1120.0,346.3 1137.8,350.3 1154.7,354.2 1171.1,358.0 1187.2,361.8 1203.4,365.6 1220.0,369.5 1237.6,373.6 1256.0,377.9 1274.5,382.3 1292.2,386.5 1308.5,390.4 1322.4,393.9 1333.6,396.8 1342.8,399.3 1350.4,401.5 1357.1,403.6 1363.4,405.7 1370.0,408.0 1377.0,410.6 1384.0,413.5 1390.7,416.5 1396.7,419.2 1401.7,421.5 1405.4,423.2 1406.4,430.3 1411.4,437.4 1418.5,439.4 1411.4,454.6 1381.0,448.5 1370.1,468.3 1343.2,461.7 1351.7,441.4 1120.0,387.8 800.0,313.9 691.5,289.6 682.4,304.8 661.0,298.7 671.3,283.5" fill="url(#gRim)"/>
<clipPath id="cpTop"><polygon points="765.0,372.0 1280.7,498.5 1186.0,675.4 664.2,521.2"/><polygon points="664.2,521.2 820.0,565.7 1080.0,642.0 1187.3,673.4 1204.3,679.4 1225.3,684.0 1235.2,663.0 1262.8,670.8 1252.9,691.9 1281.2,701.7 1275.3,717.9 1246.0,727.0 1121.5,704.8 1116.4,715.9 1106.3,720.0 1080.0,711.8 820.0,631.7 579.2,557.6 585.2,542.4 506.3,505.0 507.3,497.0 500.2,489.8 510.4,478.3 531.6,481.7 544.8,466.5 564.0,471.6 552.9,488.8 629.8,512.0"/><polygon points="652.0,278.5 658.0,267.3 672.3,266.3 682.4,259.6 688.6,260.1 697.2,260.8 707.4,261.7 718.5,262.7 729.6,263.8 740.0,265.0 749.4,266.2 758.3,267.4 767.4,268.8 776.9,270.4 787.7,272.3 800.0,274.8 814.4,277.9 830.4,281.6 847.5,285.6 865.2,289.8 882.9,294.0 900.0,298.0 916.4,301.7 932.6,305.4 948.8,309.0 965.2,312.6 982.2,316.4 1000.0,320.3 1019.1,324.5 1039.3,328.8 1060.0,333.2 1080.7,337.7 1100.9,342.1 1120.0,346.3 1137.8,350.3 1154.7,354.2 1171.1,358.0 1187.2,361.8 1203.4,365.6 1220.0,369.5 1237.6,373.6 1256.0,377.9 1274.5,382.3 1292.2,386.5 1308.5,390.4 1322.4,393.9 1333.6,396.8 1342.8,399.3 1350.4,401.5 1357.1,403.6 1363.4,405.7 1370.0,408.0 1377.0,410.6 1384.0,413.5 1390.7,416.5 1396.7,419.2 1401.7,421.5 1405.4,423.2 1406.4,430.3 1411.4,437.4 1418.5,439.4 1411.4,454.6 1381.0,448.5 1370.1,468.3 1343.2,461.7 1351.7,441.4 1120.0,387.8 800.0,313.9 691.5,289.6 682.4,304.8 661.0,298.7 671.3,283.5"/></clipPath>
<g clip-path="url(#cpTop)"><g transform="rotate(14 900 500)"><rect x="380" y="150" width="1150" height="560" filter="url(#grainF)" fill="#000"/><rect x="380" y="150" width="1150" height="560" filter="url(#grainL)" fill="#000"/></g></g>
<polyline points="664.2,521.2 820.0,565.7 1080.0,642.0 1187.3,673.4" stroke="#4a1a0c" stroke-width="1" stroke-dasharray="1.2 2.2" fill="none"/>
<polyline points="765.0,372.0 664.2,521.2" stroke="#4a1a0c" stroke-width="1" stroke-dasharray="1.2 2.2" fill="none" opacity="0.7"/>
<polyline points="682.4,259.6 688.6,260.1 697.2,260.8 707.4,261.7 718.5,262.7 729.6,263.8 740.0,265.0 749.4,266.2 758.3,267.4 767.4,268.8 776.9,270.4 787.7,272.3 800.0,274.8 814.4,277.9 830.4,281.6 847.5,285.6 865.2,289.8 882.9,294.0 900.0,298.0 916.4,301.7 932.6,305.4 948.8,309.0 965.2,312.6 982.2,316.4 1000.0,320.3 1019.1,324.5 1039.3,328.8 1060.0,333.2 1080.7,337.7 1100.9,342.1 1120.0,346.3 1137.8,350.3 1154.7,354.2 1171.1,358.0 1187.2,361.8 1203.4,365.6 1220.0,369.5 1237.6,373.6 1256.0,377.9 1274.5,382.3 1292.2,386.5 1308.5,390.4 1322.4,393.9 1333.6,396.8 1342.8,399.3 1350.4,401.5 1357.1,403.6 1363.4,405.7 1370.0,408.0 1377.0,410.6 1384.0,413.5 1390.7,416.5 1396.7,419.2 1401.7,421.5 1405.4,423.2 1406.4,430.3 1411.4,437.4 1418.5,439.4" stroke="#4a1a0c" stroke-width="1" stroke-dasharray="1.2 2.2" fill="none"/>
<polyline points="1343.2,461.7 1343.4,465.1 1343.8,469.9 1344.2,475.5 1344.6,481.5 1344.9,487.4 1345.1,492.6 1345.1,497.2 1345.0,501.5 1344.8,505.6 1344.5,509.8 1344.2,514.2 1343.8,518.9 1343.3,524.1 1342.7,529.8 1342.0,535.7 1341.3,541.5 1340.6,546.9 1339.9,551.7 1339.3,555.8 1338.7,559.3 1338.0,562.4 1337.4,565.4 1336.7,568.3 1335.9,571.4 1335.1,574.5 1334.2,577.4 1333.3,580.4 1332.3,583.4 1331.2,586.5 1329.8,590.0 1328.2,593.8 1326.4,597.8 1324.5,602.0 1322.4,606.4 1320.2,610.7 1318.0,615.0 1315.7,619.3 1313.2,623.8 1310.6,628.3 1308.0,632.7 1305.5,637.0 1303.0,641.0 1300.6,644.7 1298.4,648.1 1296.1,651.3 1293.9,654.5 1291.5,657.7 1289.0,661.0 1286.1,664.7 1282.9,668.7 1279.6,672.8 1276.5,676.5 1273.9,679.7 1272.0,682.0" stroke="#4a1a0c" stroke-width="1" stroke-dasharray="1.2 2.2" fill="none" opacity="0.7"/>
<polyline points="1235.2,663.0 1262.8,670.8" stroke="#4a1a0c" stroke-width="1" stroke-dasharray="1.2 2.2" fill="none"/>
</svg>
<svg style="position:absolute;left:1270px;top:5px" width="130" height="26" viewBox="1523 82 130 26">
<rect x="1528" y="85.500" width="16.500" height="16" fill="#c8c8f0" stroke="#111" stroke-width="1.200"/><rect x="1533" y="90.500" width="6.500" height="6" fill="none" stroke="#111" stroke-width="1.200"/><path d="M1529.500 87l3 3M1543 87l-3 3M1529.500 100l3-3M1543 100l-3-3" stroke="#111" stroke-width="1.200"/>
<path d="M1560.500 92v10" stroke="#101080" stroke-width="1.200"/><path d="M1560.500 102l-6-5" stroke="#108010" stroke-width="1.200"/><path d="M1560.500 102l6-5" stroke="#901010" stroke-width="1.200"/><text x="1558.5" y="90" font-family="Liberation Sans,sans-serif" font-size="6.5" font-weight="bold" fill="#101080">z</text><text x="1550.5" y="96" font-family="Liberation Sans,sans-serif" font-size="6.5" font-weight="bold" fill="#108010">y</text><text x="1566.5" y="96" font-family="Liberation Sans,sans-serif" font-size="6.5" font-weight="bold" fill="#901010">x</text>
<path d="M1580.5 88v12.500" stroke="#108010" stroke-width="1.200"/><path d="M1580.5 85.500l-2 3.500h4z" fill="#108010"/><path d="M1580.5 100.500h10" stroke="#901010" stroke-width="1.200"/><path d="M1593.0 100.500l-3.500-2v4z" fill="#901010"/><text x="1579.0" y="86.0" font-family="Liberation Sans,sans-serif" font-size="6.5" font-weight="bold" fill="#108010">y</text><text x="1592.5" y="104" font-family="Liberation Sans,sans-serif" font-size="6.5" font-weight="bold" fill="#901010">x</text><text x="1575.0" y="104" font-family="Liberation Sans,sans-serif" font-size="6.5" font-weight="bold" fill="#101080">z</text><text x="1584.5" y="97" font-family="Liberation Sans,sans-serif" font-size="10.500" font-weight="bold" fill="#222">Z</text>
<path d="M1605.5 88v12.500" stroke="#101080" stroke-width="1.200"/><path d="M1605.5 85.500l-2 3.500h4z" fill="#101080"/><path d="M1605.5 100.500h10" stroke="#108010" stroke-width="1.200"/><path d="M1618.0 100.500l-3.500-2v4z" fill="#108010"/><text x="1604.0" y="86.0" font-family="Liberation Sans,sans-serif" font-size="6.5" font-weight="bold" fill="#101080">z</text><text x="1617.5" y="104" font-family="Liberation Sans,sans-serif" font-size="6.5" font-weight="bold" fill="#108010">y</text><text x="1600.0" y="104" font-family="Liberation Sans,sans-serif" font-size="6.5" font-weight="bold" fill="#901010">x</text><text x="1609.5" y="97" font-family="Liberation Sans,sans-serif" font-size="10.500" font-weight="bold" fill="#222">X</text>
<path d="M1630.5 88v12.500" stroke="#101080" stroke-width="1.200"/><path d="M1630.5 85.500l-2 3.500h4z" fill="#101080"/><path d="M1630.5 100.500h10" stroke="#901010" stroke-width="1.200"/><path d="M1643.0 100.500l-3.500-2v4z" fill="#901010"/><text x="1629.0" y="86.0" font-family="Liberation Sans,sans-serif" font-size="6.5" font-weight="bold" fill="#101080">z</text><text x="1642.5" y="104" font-family="Liberation Sans,sans-serif" font-size="6.5" font-weight="bold" fill="#901010">x</text><text x="1625.0" y="104" font-family="Liberation Sans,sans-serif" font-size="6.5" font-weight="bold" fill="#108010">y</text><text x="1634.5" y="97" font-family="Liberation Sans,sans-serif" font-size="10.500" font-weight="bold" fill="#222">Y</text>
</svg>
</div>
<div id="status" class="abs"><div style="left:2px;top:4px;font-size:12px;letter-spacing:-.4px">Ready</div>
<div style="left:1315px;top:1px;width:1px;height:17px;background:#c8c8c8"></div>
<div style="left:1320px;top:4px;font-size:12px;white-space:pre;letter-spacing:-.5px">X:  8.1350 Y:  0.7530 Z: -0.0938</div></div>
<div id="task" class="abs"><svg style="left:0;top:0" width="1680" height="40" viewBox="0 1010 1680 40">
<defs><pattern id="grip" x="0" y="1015" width="3" height="3" patternUnits="userSpaceOnUse"><rect width="1.600" height="1.600" fill="#2c2a3c"/><rect x="1.600" y="1.600" width="1" height="1" fill="#8a86a0"/></pattern><linearGradient id="ieg" x1="0" y1="0" x2="0" y2="1"><stop offset="0" stop-color="#7fdcff"/><stop offset="1" stop-color="#1a90e0"/></linearGradient><linearGradient id="exf" x1="0" y1="0" x2="0" y2="1"><stop offset="0" stop-color="#fdf0b0"/><stop offset="1" stop-color="#ecc75c"/></linearGradient><linearGradient id="asp" x1="0" y1="0" x2="1" y2="1"><stop offset="0" stop-color="#d86a48"/><stop offset="1" stop-color="#8a3018"/></linearGradient></defs>
<rect x="254.500" y="1011.500" width="57.500" height="37" fill="#7c7b96" stroke="#a3a1b6"/>
<rect x="316" y="1011.500" width="50" height="37" fill="#7d7a94" stroke="#a3a1b6"/><path d="M369.500 1011.500v37M373.500 1011.500v37" stroke="#a3a1b6"/><rect x="366.500" y="1012" width="7" height="36" fill="#75718c" opacity=".6"/>
<rect x="378.500" y="1011.500" width="57.500" height="37" fill="#9b98ab" stroke="#e4e2ee" stroke-width="1.200"/>
<path d="M12 1019.800l11-1.700v10.200h-11zM24.500 1017.900l14-2.100v12.500h-14zM12 1029.900h11v10.200l-11-1.700zM24.500 1029.900h14v12.500l-14-2.100z" fill="#fff"/>
<rect x="50" y="1015" width="9" height="30" fill="url(#grip)"/>
<circle cx="97.500" cy="1030" r="13" fill="url(#ieg)"/><circle cx="97.500" cy="1029" r="6" fill="#5c5875"/><rect x="87" y="1028.500" width="23" height="4.500" fill="url(#ieg)"/><path d="M99 1033h13v3.500l-5 1.500h-8z" fill="#5e5976"/>
<ellipse cx="97" cy="1029" rx="18" ry="8" fill="none" stroke="#f8c020" stroke-width="2.500" transform="rotate(-40 97 1029)" stroke-dasharray="70 21" stroke-dashoffset="-10"/>
<circle cx="159" cy="1029.5" r="14.8" fill="#db4437"/><path d="M159 1029.5L171.82 1022.10A14.8 14.8 0 0 1 159.00 1044.30z" fill="#ffcd40"/><path d="M159 1029.5L159.00 1044.30A14.8 14.8 0 0 1 146.18 1022.10z" fill="#0f9d58"/><path d="M159 1029.5L146.18 1022.10A14.8 14.8 0 0 1 171.82 1022.10z" fill="#db4437"/><path d="M171.82 1022.10L162.40 1035.40L159 1029.5z" fill="#db4437"/><path d="M159.00 1044.30L152.19 1029.50L159 1029.5z" fill="#ffcd40"/><path d="M146.18 1022.10L162.40 1023.60L159 1029.5z" fill="#0f9d58"/><circle cx="159" cy="1029.5" r="6.81" fill="#fff"/><circle cx="159" cy="1029.5" r="5.33" fill="#4285f4"/>
<circle cx="283" cy="1029.5" r="14.5" fill="#db4437"/><path d="M283 1029.5L295.56 1022.25A14.5 14.5 0 0 1 283.00 1044.00z" fill="#ffcd40"/><path d="M283 1029.5L283.00 1044.00A14.5 14.5 0 0 1 270.44 1022.25z" fill="#0f9d58"/><path d="M283 1029.5L270.44 1022.25A14.5 14.5 0 0 1 295.56 1022.25z" fill="#db4437"/><path d="M295.56 1022.25L286.33 1035.28L283 1029.5z" fill="#db4437"/><path d="M283.00 1044.00L276.33 1029.50L283 1029.5z" fill="#ffcd40"/><path d="M270.44 1022.25L286.33 1023.72L283 1029.5z" fill="#0f9d58"/><circle cx="283" cy="1029.5" r="6.67" fill="#fff"/><circle cx="283" cy="1029.5" r="5.22" fill="#4285f4"/>
<path d="M206 1020h11l2 2h17v22h-30z" fill="#e8c860"/><rect x="208" y="1018" width="6" height="2.500" fill="#30b040"/><rect x="217" y="1020" width="5" height="2.500" fill="#e04030"/><rect x="225" y="1021.500" width="6" height="2.500" fill="#3090f0"/><rect x="209" y="1020.500" width="25" height="4" fill="#fff"/><path d="M205.500 1025h31v19.500h-31z" fill="url(#exf)"/><path d="M209.500 1045v-10c0-1.500 1-2.500 2.500-2.500h18c1.500 0 2.500 1 2.500 2.500v10h-5v-7.500h-13v7.500z" fill="#8fd8f8" stroke="#38a0d8" stroke-width="1"/>
<path d="M325 1020l13-5 14 3.500v17l-13 8.500-14-7z" fill="#d81818"/><path d="M325 1020l14 4 13-5.500-14-3.500z" fill="#f04848"/><path d="M339 1024v20l13-8.500v-17z" fill="#b01010"/><text transform="translate(326,1038.500) skewY(14)" font-family="Liberation Sans,sans-serif" font-size="19" font-weight="bold" fill="#fff" stroke="#5a0808" stroke-width=".5">S</text><text transform="translate(339.500,1040.500) skewY(-24) scale(.82,1)" font-family="Liberation Sans,sans-serif" font-size="18" font-weight="bold" fill="#fff" stroke="#5a0808" stroke-width=".5">W</text>
<path d="M413 1014.500c.5 6-3.500 10-8.500 15.500 6.500-2.500 10-6.500 10.500-11.500zM413.500 1024c0 6.500-5.500 11.500-10 19.500 7.500-5.500 11.500-10.500 11.500-15.500z" fill="url(#asp)"/>
<rect x="1209" y="1015" width="9" height="30" fill="url(#grip)"/>
<text x="1223" y="1034" font-family="Liberation Sans,sans-serif" font-size="12.500" fill="#fff" letter-spacing="-.2">Address</text>
<rect x="1271" y="1020.500" width="230" height="20.500" fill="#fff"/><path d="M1476.500 1021v19.500" stroke="#c8c8c8"/><path d="M1463 1028.500l4 4.500 4-4.500" stroke="#333" stroke-width="1.600" fill="none"/>
<path d="M1493 1028a5 5 0 1 1-4-2" stroke="#777" stroke-width="1.500" fill="none"/><path d="M1487 1023l4 3-4 3z" fill="#777"/>
<path d="M1509 1034l4.500-5 4.500 5z" fill="#f0f0f8"/>
<path d="M1531.500 1024v15" stroke="#fff" stroke-width="1.600"/><path d="M1532.500 1025c3-1.500 4 1.500 7 1 2 0 4-1 5.500-1-1 2-2 5-3.500 6-2 0-3-1-5-1-2 0-3 .8-4 1.200z" fill="#fff"/>
<rect x="1560" y="1025.500" width="9.500" height="8.500" fill="none" stroke="#fff" stroke-width="1.400"/><path d="M1565 1034v3M1561 1038h8" stroke="#fff" stroke-width="1.400"/><rect x="1555" y="1024.500" width="4.500" height="6" rx="1" fill="none" stroke="#fff" stroke-width="1.300"/><path d="M1557.200 1030.500v7" stroke="#fff" stroke-width="1.400"/>
<path d="M1579 1029h3l4-4.500v14.500l-4-4.500h-3z" fill="#fff"/><circle cx="1589.500" cy="1035" r="4.200" fill="#e81818" stroke="#fff" stroke-width="1.200"/><path d="M1587 1032.500l5 5" stroke="#fff" stroke-width="1.300"/>
<text x="1637" y="1027" text-anchor="middle" font-family="Liberation Sans,sans-serif" font-size="12.500" fill="#fff" letter-spacing="-.3">12:42 PM</text>
<text x="1637" y="1044.500" text-anchor="middle" font-family="Liberation Sans,sans-serif" font-size="12.500" fill="#fff" letter-spacing="-.2">3/7/2017</text>
</svg></div>
</body></html>
